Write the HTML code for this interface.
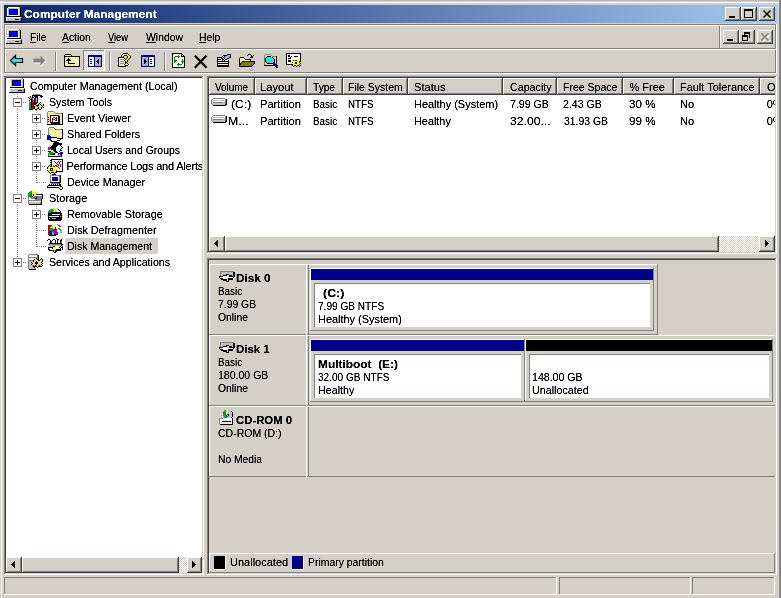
<!DOCTYPE html><html><head><meta charset="utf-8"><style>
html,body{margin:0;padding:0;width:781px;height:598px;overflow:hidden;background:#D4D0C8}
body{position:relative;font-family:"Liberation Sans",sans-serif;font-size:11px;line-height:11px}
div,span,svg{position:absolute;display:block}
span{white-space:pre;filter:url(#crisp)}
</style></head><body>
<svg width="0" height="0" style="left:0;top:0"><filter id="crisp"><feComponentTransfer><feFuncA type="linear" slope="1.6" intercept="-0.1"/></feComponentTransfer></filter></svg>
<div style="left:0px;top:0px;width:781px;height:598px;background:#D4D0C8;"></div>
<div style="left:0px;top:0px;width:781px;height:1px;background:#B8B8BC;"></div>
<div style="left:0px;top:2px;width:779px;height:1px;background:#FFFFFF;"></div>
<div style="left:1px;top:1px;width:1px;height:597px;background:#FFFFFF;"></div>
<div style="left:779px;top:0px;width:1px;height:598px;background:#8A8A8A;"></div>
<div style="left:780px;top:0px;width:1px;height:598px;background:#7E7E7E;"></div>
<div style="left:4px;top:5px;width:773px;height:18px;background:linear-gradient(to right,#0A246A,#A6CAF0);"></div>
<svg style="left:6px;top:7px" width="16" height="15" shape-rendering="crispEdges"><rect x="2" y="0" width="11" height="1" fill="#FFFFFF"/><rect x="13" y="0" width="1" height="1" fill="#808080"/><rect x="1" y="1" width="1" height="1" fill="#FFFFFF"/><rect x="2" y="1" width="12" height="1" fill="#C0C0C0"/><rect x="14" y="1" width="1" height="1" fill="#000000"/><rect x="1" y="2" width="1" height="1" fill="#FFFFFF"/><rect x="2" y="2" width="1" height="1" fill="#C0C0C0"/><rect x="3" y="2" width="9" height="1" fill="#000000"/><rect x="12" y="2" width="1" height="1" fill="#FFFFFF"/><rect x="13" y="2" width="1" height="1" fill="#C0C0C0"/><rect x="14" y="2" width="1" height="1" fill="#000000"/><rect x="1" y="3" width="1" height="1" fill="#FFFFFF"/><rect x="2" y="3" width="1" height="1" fill="#C0C0C0"/><rect x="3" y="3" width="1" height="1" fill="#000000"/><rect x="4" y="3" width="8" height="1" fill="#0000FF"/><rect x="12" y="3" width="1" height="1" fill="#FFFFFF"/><rect x="13" y="3" width="1" height="1" fill="#C0C0C0"/><rect x="14" y="3" width="1" height="1" fill="#000000"/><rect x="1" y="4" width="1" height="1" fill="#FFFFFF"/><rect x="2" y="4" width="1" height="1" fill="#C0C0C0"/><rect x="3" y="4" width="1" height="1" fill="#000000"/><rect x="4" y="4" width="8" height="1" fill="#0000FF"/><rect x="12" y="4" width="1" height="1" fill="#FFFFFF"/><rect x="13" y="4" width="1" height="1" fill="#C0C0C0"/><rect x="14" y="4" width="1" height="1" fill="#000000"/><rect x="1" y="5" width="1" height="1" fill="#FFFFFF"/><rect x="2" y="5" width="1" height="1" fill="#C0C0C0"/><rect x="3" y="5" width="1" height="1" fill="#000000"/><rect x="4" y="5" width="8" height="1" fill="#0000FF"/><rect x="12" y="5" width="1" height="1" fill="#FFFFFF"/><rect x="13" y="5" width="1" height="1" fill="#C0C0C0"/><rect x="14" y="5" width="1" height="1" fill="#000000"/><rect x="1" y="6" width="1" height="1" fill="#FFFFFF"/><rect x="2" y="6" width="1" height="1" fill="#C0C0C0"/><rect x="3" y="6" width="1" height="1" fill="#000000"/><rect x="4" y="6" width="8" height="1" fill="#0000FF"/><rect x="12" y="6" width="1" height="1" fill="#FFFFFF"/><rect x="13" y="6" width="1" height="1" fill="#C0C0C0"/><rect x="14" y="6" width="1" height="1" fill="#000000"/><rect x="1" y="7" width="1" height="1" fill="#FFFFFF"/><rect x="2" y="7" width="1" height="1" fill="#C0C0C0"/><rect x="3" y="7" width="1" height="1" fill="#000000"/><rect x="4" y="7" width="8" height="1" fill="#0000FF"/><rect x="12" y="7" width="1" height="1" fill="#FFFFFF"/><rect x="13" y="7" width="1" height="1" fill="#C0C0C0"/><rect x="14" y="7" width="1" height="1" fill="#000000"/><rect x="1" y="8" width="1" height="1" fill="#FFFFFF"/><rect x="2" y="8" width="1" height="1" fill="#C0C0C0"/><rect x="3" y="8" width="10" height="1" fill="#FFFFFF"/><rect x="13" y="8" width="1" height="1" fill="#C0C0C0"/><rect x="14" y="8" width="1" height="1" fill="#000000"/><rect x="1" y="9" width="14" height="1" fill="#000000"/><rect x="0" y="10" width="15" height="1" fill="#FFFFFF"/><rect x="15" y="10" width="1" height="1" fill="#808080"/><rect x="0" y="11" width="1" height="1" fill="#FFFFFF"/><rect x="1" y="11" width="13" height="1" fill="#C0C0C0"/><rect x="14" y="11" width="1" height="1" fill="#808080"/><rect x="15" y="11" width="1" height="1" fill="#000000"/><rect x="0" y="12" width="1" height="1" fill="#FFFFFF"/><rect x="1" y="12" width="8" height="1" fill="#C0C0C0"/><rect x="9" y="12" width="4" height="1" fill="#000000"/><rect x="13" y="12" width="1" height="1" fill="#C0C0C0"/><rect x="14" y="12" width="1" height="1" fill="#808080"/><rect x="15" y="12" width="1" height="1" fill="#000000"/><rect x="0" y="13" width="1" height="1" fill="#FFFFFF"/><rect x="1" y="13" width="13" height="1" fill="#C0C0C0"/><rect x="14" y="13" width="1" height="1" fill="#808080"/><rect x="15" y="13" width="1" height="1" fill="#000000"/><rect x="0" y="14" width="16" height="1" fill="#000000"/></svg>
<span style="left:24.01px;top:9px;font-weight:bold;transform:scaleX(1.0851);transform-origin:0 0;color:#fff;">Computer Management</span>
<div style="left:725px;top:7px;width:16px;height:14px;background:#D4D0C8;"></div>
<div style="left:725px;top:7px;width:16px;height:1px;background:#FFFFFF;"></div>
<div style="left:725px;top:7px;width:1px;height:14px;background:#FFFFFF;"></div>
<div style="left:725px;top:20px;width:16px;height:1px;background:#404040;"></div>
<div style="left:740px;top:7px;width:1px;height:14px;background:#404040;"></div>
<div style="left:726px;top:19px;width:14px;height:1px;background:#808080;"></div>
<div style="left:739px;top:8px;width:1px;height:12px;background:#808080;"></div>
<div style="left:741px;top:7px;width:16px;height:14px;background:#D4D0C8;"></div>
<div style="left:741px;top:7px;width:16px;height:1px;background:#FFFFFF;"></div>
<div style="left:741px;top:7px;width:1px;height:14px;background:#FFFFFF;"></div>
<div style="left:741px;top:20px;width:16px;height:1px;background:#404040;"></div>
<div style="left:756px;top:7px;width:1px;height:14px;background:#404040;"></div>
<div style="left:742px;top:19px;width:14px;height:1px;background:#808080;"></div>
<div style="left:755px;top:8px;width:1px;height:12px;background:#808080;"></div>
<div style="left:759px;top:7px;width:16px;height:14px;background:#D4D0C8;"></div>
<div style="left:759px;top:7px;width:16px;height:1px;background:#FFFFFF;"></div>
<div style="left:759px;top:7px;width:1px;height:14px;background:#FFFFFF;"></div>
<div style="left:759px;top:20px;width:16px;height:1px;background:#404040;"></div>
<div style="left:774px;top:7px;width:1px;height:14px;background:#404040;"></div>
<div style="left:760px;top:19px;width:14px;height:1px;background:#808080;"></div>
<div style="left:773px;top:8px;width:1px;height:12px;background:#808080;"></div>
<svg style="left:725px;top:7px" width="50" height="14" viewBox="0 0 50 14"><g shape-rendering="crispEdges"><rect x="4" y="9" width="6" height="2" fill="#000"/><rect x="19" y="2" width="9" height="2" fill="#000"/><rect x="19" y="4" width="1" height="7" fill="#000"/><rect x="27" y="4" width="1" height="7" fill="#000"/><rect x="19" y="10" width="9" height="1" fill="#000"/></g><path d="M38.5 3.5 L45.5 10.5 M45.5 3.5 L38.5 10.5" stroke="#000" stroke-width="1.6"/></svg>
<div style="left:4px;top:24px;width:772px;height:1px;background:#808080;"></div>
<div style="left:4px;top:24px;width:1px;height:50px;background:#808080;"></div>
<div style="left:5px;top:25px;width:771px;height:1px;background:#FFFFFF;"></div>
<div style="left:5px;top:25px;width:1px;height:48px;background:#FFFFFF;"></div>
<div style="left:775px;top:24px;width:1px;height:49px;background:#808080;"></div>
<div style="left:776px;top:24px;width:1px;height:50px;background:#FFFFFF;"></div>
<div style="left:4px;top:48px;width:772px;height:1px;background:#808080;"></div>
<div style="left:5px;top:49px;width:771px;height:1px;background:#FFFFFF;"></div>
<div style="left:4px;top:72px;width:772px;height:1px;background:#808080;"></div>
<div style="left:4px;top:73px;width:773px;height:1px;background:#FFFFFF;"></div>
<svg style="left:6px;top:29px" width="16" height="15" shape-rendering="crispEdges"><rect x="2" y="0" width="11" height="1" fill="#FFFFFF"/><rect x="13" y="0" width="1" height="1" fill="#808080"/><rect x="1" y="1" width="1" height="1" fill="#FFFFFF"/><rect x="2" y="1" width="12" height="1" fill="#C0C0C0"/><rect x="14" y="1" width="1" height="1" fill="#000000"/><rect x="1" y="2" width="1" height="1" fill="#FFFFFF"/><rect x="2" y="2" width="1" height="1" fill="#C0C0C0"/><rect x="3" y="2" width="9" height="1" fill="#000000"/><rect x="12" y="2" width="1" height="1" fill="#FFFFFF"/><rect x="13" y="2" width="1" height="1" fill="#C0C0C0"/><rect x="14" y="2" width="1" height="1" fill="#000000"/><rect x="1" y="3" width="1" height="1" fill="#FFFFFF"/><rect x="2" y="3" width="1" height="1" fill="#C0C0C0"/><rect x="3" y="3" width="1" height="1" fill="#000000"/><rect x="4" y="3" width="8" height="1" fill="#0000FF"/><rect x="12" y="3" width="1" height="1" fill="#FFFFFF"/><rect x="13" y="3" width="1" height="1" fill="#C0C0C0"/><rect x="14" y="3" width="1" height="1" fill="#000000"/><rect x="1" y="4" width="1" height="1" fill="#FFFFFF"/><rect x="2" y="4" width="1" height="1" fill="#C0C0C0"/><rect x="3" y="4" width="1" height="1" fill="#000000"/><rect x="4" y="4" width="8" height="1" fill="#0000FF"/><rect x="12" y="4" width="1" height="1" fill="#FFFFFF"/><rect x="13" y="4" width="1" height="1" fill="#C0C0C0"/><rect x="14" y="4" width="1" height="1" fill="#000000"/><rect x="1" y="5" width="1" height="1" fill="#FFFFFF"/><rect x="2" y="5" width="1" height="1" fill="#C0C0C0"/><rect x="3" y="5" width="1" height="1" fill="#000000"/><rect x="4" y="5" width="8" height="1" fill="#0000FF"/><rect x="12" y="5" width="1" height="1" fill="#FFFFFF"/><rect x="13" y="5" width="1" height="1" fill="#C0C0C0"/><rect x="14" y="5" width="1" height="1" fill="#000000"/><rect x="1" y="6" width="1" height="1" fill="#FFFFFF"/><rect x="2" y="6" width="1" height="1" fill="#C0C0C0"/><rect x="3" y="6" width="1" height="1" fill="#000000"/><rect x="4" y="6" width="8" height="1" fill="#0000FF"/><rect x="12" y="6" width="1" height="1" fill="#FFFFFF"/><rect x="13" y="6" width="1" height="1" fill="#C0C0C0"/><rect x="14" y="6" width="1" height="1" fill="#000000"/><rect x="1" y="7" width="1" height="1" fill="#FFFFFF"/><rect x="2" y="7" width="1" height="1" fill="#C0C0C0"/><rect x="3" y="7" width="1" height="1" fill="#000000"/><rect x="4" y="7" width="8" height="1" fill="#0000FF"/><rect x="12" y="7" width="1" height="1" fill="#FFFFFF"/><rect x="13" y="7" width="1" height="1" fill="#C0C0C0"/><rect x="14" y="7" width="1" height="1" fill="#000000"/><rect x="1" y="8" width="1" height="1" fill="#FFFFFF"/><rect x="2" y="8" width="1" height="1" fill="#C0C0C0"/><rect x="3" y="8" width="10" height="1" fill="#FFFFFF"/><rect x="13" y="8" width="1" height="1" fill="#C0C0C0"/><rect x="14" y="8" width="1" height="1" fill="#000000"/><rect x="1" y="9" width="14" height="1" fill="#000000"/><rect x="0" y="10" width="15" height="1" fill="#FFFFFF"/><rect x="15" y="10" width="1" height="1" fill="#808080"/><rect x="0" y="11" width="1" height="1" fill="#FFFFFF"/><rect x="1" y="11" width="13" height="1" fill="#C0C0C0"/><rect x="14" y="11" width="1" height="1" fill="#808080"/><rect x="15" y="11" width="1" height="1" fill="#000000"/><rect x="0" y="12" width="1" height="1" fill="#FFFFFF"/><rect x="1" y="12" width="8" height="1" fill="#C0C0C0"/><rect x="9" y="12" width="4" height="1" fill="#000000"/><rect x="13" y="12" width="1" height="1" fill="#C0C0C0"/><rect x="14" y="12" width="1" height="1" fill="#808080"/><rect x="15" y="12" width="1" height="1" fill="#000000"/><rect x="0" y="13" width="1" height="1" fill="#FFFFFF"/><rect x="1" y="13" width="13" height="1" fill="#C0C0C0"/><rect x="14" y="13" width="1" height="1" fill="#808080"/><rect x="15" y="13" width="1" height="1" fill="#000000"/><rect x="0" y="14" width="16" height="1" fill="#000000"/></svg>
<span style="left:29.67px;top:32px;transform:scaleX(0.9180);transform-origin:0 0;color:#000;">File</span>
<div style="left:30px;top:42px;width:6px;height:1px;background:#000;"></div>
<span style="left:62.48px;top:32px;transform:scaleX(0.9387);transform-origin:0 0;color:#000;">Action</span>
<div style="left:62px;top:42px;width:7px;height:1px;background:#000;"></div>
<span style="left:108.46px;top:32px;transform:scaleX(0.8467);transform-origin:0 0;color:#000;">View</span>
<div style="left:108px;top:42px;width:7px;height:1px;background:#000;"></div>
<span style="left:146.45px;top:32px;transform:scaleX(0.9463);transform-origin:0 0;color:#000;">Window</span>
<div style="left:146px;top:42px;width:10px;height:1px;background:#000;"></div>
<span style="left:198.65px;top:32px;transform:scaleX(0.9403);transform-origin:0 0;color:#000;">Help</span>
<div style="left:199px;top:42px;width:7px;height:1px;background:#000;"></div>
<div style="left:719px;top:26px;width:1px;height:22px;background:#808080;"></div>
<div style="left:720px;top:26px;width:1px;height:22px;background:#FFFFFF;"></div>
<div style="left:723px;top:30px;width:16px;height:14px;background:#D4D0C8;"></div>
<div style="left:723px;top:30px;width:16px;height:1px;background:#FFFFFF;"></div>
<div style="left:723px;top:30px;width:1px;height:14px;background:#FFFFFF;"></div>
<div style="left:723px;top:43px;width:16px;height:1px;background:#404040;"></div>
<div style="left:738px;top:30px;width:1px;height:14px;background:#404040;"></div>
<div style="left:724px;top:42px;width:14px;height:1px;background:#808080;"></div>
<div style="left:737px;top:31px;width:1px;height:12px;background:#808080;"></div>
<div style="left:739px;top:30px;width:16px;height:14px;background:#D4D0C8;"></div>
<div style="left:739px;top:30px;width:16px;height:1px;background:#FFFFFF;"></div>
<div style="left:739px;top:30px;width:1px;height:14px;background:#FFFFFF;"></div>
<div style="left:739px;top:43px;width:16px;height:1px;background:#404040;"></div>
<div style="left:754px;top:30px;width:1px;height:14px;background:#404040;"></div>
<div style="left:740px;top:42px;width:14px;height:1px;background:#808080;"></div>
<div style="left:753px;top:31px;width:1px;height:12px;background:#808080;"></div>
<div style="left:757px;top:30px;width:16px;height:14px;background:#D4D0C8;"></div>
<div style="left:757px;top:30px;width:16px;height:1px;background:#FFFFFF;"></div>
<div style="left:757px;top:30px;width:1px;height:14px;background:#FFFFFF;"></div>
<div style="left:757px;top:43px;width:16px;height:1px;background:#404040;"></div>
<div style="left:772px;top:30px;width:1px;height:14px;background:#404040;"></div>
<div style="left:758px;top:42px;width:14px;height:1px;background:#808080;"></div>
<div style="left:771px;top:31px;width:1px;height:12px;background:#808080;"></div>
<svg style="left:723px;top:30px" width="50" height="14" viewBox="0 0 50 14"><g shape-rendering="crispEdges"><rect x="4" y="9" width="6" height="2" fill="#000"/><rect x="21" y="2" width="6" height="2" fill="#000"/><rect x="26" y="4" width="1" height="4" fill="#000"/><rect x="21" y="4" width="1" height="1" fill="#000"/><rect x="19" y="5" width="6" height="2" fill="#000"/><rect x="19" y="7" width="1" height="4" fill="#000"/><rect x="24" y="7" width="1" height="4" fill="#000"/><rect x="19" y="10" width="6" height="1" fill="#000"/></g><path d="M38.5 3.5 L45.5 10.5 M45.5 3.5 L38.5 10.5" stroke="#fff" stroke-width="1.6" transform="translate(1 1)"/><path d="M38.5 3.5 L45.5 10.5 M45.5 3.5 L38.5 10.5" stroke="#808080" stroke-width="1.6"/></svg>
<div style="left:55px;top:52px;width:1px;height:19px;background:#808080;"></div>
<div style="left:56px;top:52px;width:1px;height:19px;background:#FFFFFF;"></div>
<div style="left:109px;top:52px;width:1px;height:19px;background:#808080;"></div>
<div style="left:110px;top:52px;width:1px;height:19px;background:#FFFFFF;"></div>
<div style="left:164px;top:52px;width:1px;height:19px;background:#808080;"></div>
<div style="left:165px;top:52px;width:1px;height:19px;background:#FFFFFF;"></div>
<div style="left:83px;top:50px;width:22px;height:21px;background:repeating-conic-gradient(#fff 0 25%,#D4D0C8 0 50%) 0 0/2px 2px;"></div>
<div style="left:83px;top:50px;width:22px;height:1px;background:#808080;"></div>
<div style="left:83px;top:50px;width:1px;height:21px;background:#808080;"></div>
<div style="left:83px;top:70px;width:22px;height:1px;background:#FFFFFF;"></div>
<div style="left:104px;top:50px;width:1px;height:21px;background:#FFFFFF;"></div>
<svg style="left:8px;top:52px" width="18" height="16" viewBox="0 0 18 16"><path d="M2.5 8.5 L7.5 3.5 L7.5 6.5 L14.5 6.5 L14.5 10.5 L7.5 10.5 L7.5 13.5 Z" fill="#33E6E6" stroke="#000" stroke-width="1.2"/></svg>
<svg style="left:31px;top:52px" width="18" height="16" viewBox="0 0 18 16"><path d="M15.5 9.5 L10.5 4.5 L10.5 7.5 L3.5 7.5 L3.5 11.5 L10.5 11.5 L10.5 14.5 Z" fill="#fff"/><path d="M14.5 8.5 L9.5 3.5 L9.5 6.5 L2.5 6.5 L2.5 10.5 L9.5 10.5 L9.5 13.5 Z" fill="#808080"/></svg>
<svg style="left:64px;top:54px" width="16" height="13" shape-rendering="crispEdges"><rect x="1" y="0" width="6" height="1" fill="#000000"/><rect x="0" y="1" width="1" height="1" fill="#000000"/><rect x="1" y="1" width="1" height="1" fill="#F4F0A0"/><rect x="2" y="1" width="4" height="1" fill="#FFFFFF"/><rect x="6" y="1" width="1" height="1" fill="#F4F0A0"/><rect x="7" y="1" width="1" height="1" fill="#000000"/><rect x="0" y="2" width="16" height="1" fill="#000000"/><rect x="0" y="3" width="1" height="1" fill="#000000"/><rect x="1" y="3" width="14" height="1" fill="#F4F0A0"/><rect x="15" y="3" width="1" height="1" fill="#000000"/><rect x="0" y="4" width="1" height="1" fill="#000000"/><rect x="1" y="4" width="3" height="1" fill="#F4F0A0"/><rect x="4" y="4" width="1" height="1" fill="#000000"/><rect x="5" y="4" width="10" height="1" fill="#F4F0A0"/><rect x="15" y="4" width="1" height="1" fill="#000000"/><rect x="0" y="5" width="1" height="1" fill="#000000"/><rect x="1" y="5" width="2" height="1" fill="#F4F0A0"/><rect x="3" y="5" width="3" height="1" fill="#000000"/><rect x="6" y="5" width="9" height="1" fill="#F4F0A0"/><rect x="15" y="5" width="1" height="1" fill="#000000"/><rect x="0" y="6" width="1" height="1" fill="#000000"/><rect x="1" y="6" width="1" height="1" fill="#F4F0A0"/><rect x="2" y="6" width="5" height="1" fill="#000000"/><rect x="7" y="6" width="8" height="1" fill="#F4F0A0"/><rect x="15" y="6" width="1" height="1" fill="#000000"/><rect x="0" y="7" width="1" height="1" fill="#000000"/><rect x="1" y="7" width="3" height="1" fill="#F4F0A0"/><rect x="4" y="7" width="1" height="1" fill="#000000"/><rect x="5" y="7" width="10" height="1" fill="#F4F0A0"/><rect x="15" y="7" width="1" height="1" fill="#000000"/><rect x="0" y="8" width="1" height="1" fill="#000000"/><rect x="1" y="8" width="3" height="1" fill="#F4F0A0"/><rect x="4" y="8" width="1" height="1" fill="#000000"/><rect x="5" y="8" width="10" height="1" fill="#F4F0A0"/><rect x="15" y="8" width="1" height="1" fill="#000000"/><rect x="0" y="9" width="1" height="1" fill="#000000"/><rect x="1" y="9" width="3" height="1" fill="#F4F0A0"/><rect x="4" y="9" width="7" height="1" fill="#000000"/><rect x="11" y="9" width="4" height="1" fill="#F4F0A0"/><rect x="15" y="9" width="1" height="1" fill="#000000"/><rect x="0" y="10" width="1" height="1" fill="#000000"/><rect x="1" y="10" width="14" height="1" fill="#F4F0A0"/><rect x="15" y="10" width="1" height="1" fill="#000000"/><rect x="0" y="11" width="1" height="1" fill="#000000"/><rect x="1" y="11" width="14" height="1" fill="#F4F0A0"/><rect x="15" y="11" width="1" height="1" fill="#000000"/><rect x="0" y="12" width="16" height="1" fill="#000000"/></svg>
<svg style="left:88px;top:55px" width="14" height="12" shape-rendering="crispEdges"><rect x="0" y="0" width="14" height="1" fill="#000080"/><rect x="0" y="1" width="14" height="1" fill="#000080"/><rect x="0" y="2" width="1" height="1" fill="#000080"/><rect x="1" y="2" width="5" height="1" fill="#FFFFFF"/><rect x="6" y="2" width="1" height="1" fill="#000080"/><rect x="7" y="2" width="6" height="1" fill="#A8A8E8"/><rect x="13" y="2" width="1" height="1" fill="#000080"/><rect x="0" y="3" width="1" height="1" fill="#000080"/><rect x="1" y="3" width="5" height="1" fill="#FFFFFF"/><rect x="6" y="3" width="1" height="1" fill="#000080"/><rect x="7" y="3" width="6" height="1" fill="#A8A8E8"/><rect x="13" y="3" width="1" height="1" fill="#000080"/><rect x="0" y="4" width="1" height="1" fill="#000080"/><rect x="1" y="4" width="1" height="1" fill="#FFFFFF"/><rect x="2" y="4" width="2" height="1" fill="#000000"/><rect x="4" y="4" width="2" height="1" fill="#FFFFFF"/><rect x="6" y="4" width="1" height="1" fill="#000080"/><rect x="7" y="4" width="3" height="1" fill="#A8A8E8"/><rect x="10" y="4" width="1" height="1" fill="#000000"/><rect x="11" y="4" width="2" height="1" fill="#A8A8E8"/><rect x="13" y="4" width="1" height="1" fill="#000080"/><rect x="0" y="5" width="1" height="1" fill="#000080"/><rect x="1" y="5" width="5" height="1" fill="#FFFFFF"/><rect x="6" y="5" width="1" height="1" fill="#000080"/><rect x="7" y="5" width="2" height="1" fill="#A8A8E8"/><rect x="9" y="5" width="2" height="1" fill="#000000"/><rect x="11" y="5" width="2" height="1" fill="#A8A8E8"/><rect x="13" y="5" width="1" height="1" fill="#000080"/><rect x="0" y="6" width="1" height="1" fill="#000080"/><rect x="1" y="6" width="1" height="1" fill="#FFFFFF"/><rect x="2" y="6" width="2" height="1" fill="#000000"/><rect x="4" y="6" width="2" height="1" fill="#FFFFFF"/><rect x="6" y="6" width="1" height="1" fill="#000080"/><rect x="7" y="6" width="1" height="1" fill="#A8A8E8"/><rect x="8" y="6" width="3" height="1" fill="#000000"/><rect x="11" y="6" width="2" height="1" fill="#A8A8E8"/><rect x="13" y="6" width="1" height="1" fill="#000080"/><rect x="0" y="7" width="1" height="1" fill="#000080"/><rect x="1" y="7" width="5" height="1" fill="#FFFFFF"/><rect x="6" y="7" width="1" height="1" fill="#000080"/><rect x="7" y="7" width="2" height="1" fill="#A8A8E8"/><rect x="9" y="7" width="2" height="1" fill="#000000"/><rect x="11" y="7" width="2" height="1" fill="#A8A8E8"/><rect x="13" y="7" width="1" height="1" fill="#000080"/><rect x="0" y="8" width="1" height="1" fill="#000080"/><rect x="1" y="8" width="1" height="1" fill="#FFFFFF"/><rect x="2" y="8" width="2" height="1" fill="#000000"/><rect x="4" y="8" width="2" height="1" fill="#FFFFFF"/><rect x="6" y="8" width="1" height="1" fill="#000080"/><rect x="7" y="8" width="3" height="1" fill="#A8A8E8"/><rect x="10" y="8" width="1" height="1" fill="#000000"/><rect x="11" y="8" width="2" height="1" fill="#A8A8E8"/><rect x="13" y="8" width="1" height="1" fill="#000080"/><rect x="0" y="9" width="1" height="1" fill="#000080"/><rect x="1" y="9" width="5" height="1" fill="#FFFFFF"/><rect x="6" y="9" width="1" height="1" fill="#000080"/><rect x="7" y="9" width="6" height="1" fill="#A8A8E8"/><rect x="13" y="9" width="1" height="1" fill="#000080"/><rect x="0" y="10" width="1" height="1" fill="#000080"/><rect x="1" y="10" width="5" height="1" fill="#FFFFFF"/><rect x="6" y="10" width="1" height="1" fill="#000080"/><rect x="7" y="10" width="6" height="1" fill="#A8A8E8"/><rect x="13" y="10" width="1" height="1" fill="#000080"/><rect x="0" y="11" width="14" height="1" fill="#000080"/></svg>
<svg style="left:117px;top:53px" width="16" height="14" shape-rendering="crispEdges"><rect x="6" y="0" width="5" height="1" fill="#000000"/><rect x="5" y="1" width="1" height="1" fill="#000000"/><rect x="6" y="1" width="5" height="1" fill="#FFFF00"/><rect x="11" y="1" width="1" height="1" fill="#000000"/><rect x="4" y="2" width="1" height="1" fill="#000000"/><rect x="5" y="2" width="2" height="1" fill="#FFFF00"/><rect x="7" y="2" width="3" height="1" fill="#000000"/><rect x="10" y="2" width="2" height="1" fill="#FFFF00"/><rect x="12" y="2" width="1" height="1" fill="#000000"/><rect x="4" y="3" width="1" height="1" fill="#000000"/><rect x="5" y="3" width="1" height="1" fill="#FFFF00"/><rect x="6" y="3" width="1" height="1" fill="#000000"/><rect x="10" y="3" width="1" height="1" fill="#000000"/><rect x="11" y="3" width="2" height="1" fill="#FFFF00"/><rect x="13" y="3" width="1" height="1" fill="#000000"/><rect x="1" y="4" width="6" height="1" fill="#000000"/><rect x="10" y="4" width="1" height="1" fill="#000000"/><rect x="11" y="4" width="2" height="1" fill="#FFFF00"/><rect x="13" y="4" width="1" height="1" fill="#000000"/><rect x="1" y="5" width="1" height="1" fill="#000000"/><rect x="2" y="5" width="5" height="1" fill="#FFFFFF"/><rect x="7" y="5" width="1" height="1" fill="#000000"/><rect x="9" y="5" width="1" height="1" fill="#000000"/><rect x="10" y="5" width="2" height="1" fill="#FFFF00"/><rect x="12" y="5" width="1" height="1" fill="#000000"/><rect x="1" y="6" width="1" height="1" fill="#000000"/><rect x="2" y="6" width="1" height="1" fill="#FFFFFF"/><rect x="3" y="6" width="4" height="1" fill="#808080"/><rect x="7" y="6" width="1" height="1" fill="#FFFFFF"/><rect x="8" y="6" width="1" height="1" fill="#000000"/><rect x="9" y="6" width="2" height="1" fill="#FFFF00"/><rect x="11" y="6" width="1" height="1" fill="#000000"/><rect x="1" y="7" width="1" height="1" fill="#000000"/><rect x="2" y="7" width="5" height="1" fill="#FFFFFF"/><rect x="7" y="7" width="1" height="1" fill="#000000"/><rect x="8" y="7" width="2" height="1" fill="#FFFF00"/><rect x="10" y="7" width="1" height="1" fill="#000000"/><rect x="1" y="8" width="1" height="1" fill="#000000"/><rect x="2" y="8" width="1" height="1" fill="#FFFFFF"/><rect x="3" y="8" width="4" height="1" fill="#808080"/><rect x="7" y="8" width="1" height="1" fill="#FFFFFF"/><rect x="8" y="8" width="1" height="1" fill="#000000"/><rect x="9" y="8" width="1" height="1" fill="#FFFF00"/><rect x="10" y="8" width="1" height="1" fill="#000000"/><rect x="1" y="9" width="1" height="1" fill="#000000"/><rect x="2" y="9" width="6" height="1" fill="#FFFFFF"/><rect x="8" y="9" width="2" height="1" fill="#000000"/><rect x="1" y="10" width="1" height="1" fill="#000000"/><rect x="2" y="10" width="1" height="1" fill="#FFFFFF"/><rect x="3" y="10" width="4" height="1" fill="#808080"/><rect x="7" y="10" width="1" height="1" fill="#FFFFFF"/><rect x="8" y="10" width="1" height="1" fill="#000000"/><rect x="9" y="10" width="1" height="1" fill="#FFFF00"/><rect x="10" y="10" width="1" height="1" fill="#000000"/><rect x="1" y="11" width="1" height="1" fill="#000000"/><rect x="2" y="11" width="5" height="1" fill="#FFFFFF"/><rect x="7" y="11" width="1" height="1" fill="#000000"/><rect x="8" y="11" width="3" height="1" fill="#FFFF00"/><rect x="11" y="11" width="1" height="1" fill="#000000"/><rect x="1" y="12" width="1" height="1" fill="#000000"/><rect x="2" y="12" width="6" height="1" fill="#FFFFFF"/><rect x="8" y="12" width="3" height="1" fill="#000000"/><rect x="1" y="13" width="8" height="1" fill="#000000"/></svg>
<svg style="left:141px;top:55px" width="14" height="12" shape-rendering="crispEdges"><rect x="0" y="0" width="14" height="1" fill="#000080"/><rect x="0" y="1" width="14" height="1" fill="#000080"/><rect x="0" y="2" width="1" height="1" fill="#000080"/><rect x="1" y="2" width="6" height="1" fill="#A8A8E8"/><rect x="7" y="2" width="1" height="1" fill="#000080"/><rect x="8" y="2" width="5" height="1" fill="#FFFFFF"/><rect x="13" y="2" width="1" height="1" fill="#000080"/><rect x="0" y="3" width="1" height="1" fill="#000080"/><rect x="1" y="3" width="6" height="1" fill="#A8A8E8"/><rect x="7" y="3" width="1" height="1" fill="#000080"/><rect x="8" y="3" width="5" height="1" fill="#FFFFFF"/><rect x="13" y="3" width="1" height="1" fill="#000080"/><rect x="0" y="4" width="1" height="1" fill="#000080"/><rect x="1" y="4" width="2" height="1" fill="#A8A8E8"/><rect x="3" y="4" width="1" height="1" fill="#000000"/><rect x="4" y="4" width="3" height="1" fill="#A8A8E8"/><rect x="7" y="4" width="1" height="1" fill="#000080"/><rect x="8" y="4" width="1" height="1" fill="#FFFFFF"/><rect x="9" y="4" width="2" height="1" fill="#000000"/><rect x="11" y="4" width="2" height="1" fill="#FFFFFF"/><rect x="13" y="4" width="1" height="1" fill="#000080"/><rect x="0" y="5" width="1" height="1" fill="#000080"/><rect x="1" y="5" width="2" height="1" fill="#A8A8E8"/><rect x="3" y="5" width="2" height="1" fill="#000000"/><rect x="5" y="5" width="2" height="1" fill="#A8A8E8"/><rect x="7" y="5" width="1" height="1" fill="#000080"/><rect x="8" y="5" width="5" height="1" fill="#FFFFFF"/><rect x="13" y="5" width="1" height="1" fill="#000080"/><rect x="0" y="6" width="1" height="1" fill="#000080"/><rect x="1" y="6" width="2" height="1" fill="#A8A8E8"/><rect x="3" y="6" width="3" height="1" fill="#000000"/><rect x="6" y="6" width="1" height="1" fill="#A8A8E8"/><rect x="7" y="6" width="1" height="1" fill="#000080"/><rect x="8" y="6" width="1" height="1" fill="#FFFFFF"/><rect x="9" y="6" width="2" height="1" fill="#000000"/><rect x="11" y="6" width="2" height="1" fill="#FFFFFF"/><rect x="13" y="6" width="1" height="1" fill="#000080"/><rect x="0" y="7" width="1" height="1" fill="#000080"/><rect x="1" y="7" width="2" height="1" fill="#A8A8E8"/><rect x="3" y="7" width="2" height="1" fill="#000000"/><rect x="5" y="7" width="2" height="1" fill="#A8A8E8"/><rect x="7" y="7" width="1" height="1" fill="#000080"/><rect x="8" y="7" width="5" height="1" fill="#FFFFFF"/><rect x="13" y="7" width="1" height="1" fill="#000080"/><rect x="0" y="8" width="1" height="1" fill="#000080"/><rect x="1" y="8" width="2" height="1" fill="#A8A8E8"/><rect x="3" y="8" width="1" height="1" fill="#000000"/><rect x="4" y="8" width="3" height="1" fill="#A8A8E8"/><rect x="7" y="8" width="1" height="1" fill="#000080"/><rect x="8" y="8" width="1" height="1" fill="#FFFFFF"/><rect x="9" y="8" width="2" height="1" fill="#000000"/><rect x="11" y="8" width="2" height="1" fill="#FFFFFF"/><rect x="13" y="8" width="1" height="1" fill="#000080"/><rect x="0" y="9" width="1" height="1" fill="#000080"/><rect x="1" y="9" width="6" height="1" fill="#A8A8E8"/><rect x="7" y="9" width="1" height="1" fill="#000080"/><rect x="8" y="9" width="5" height="1" fill="#FFFFFF"/><rect x="13" y="9" width="1" height="1" fill="#000080"/><rect x="0" y="10" width="1" height="1" fill="#000080"/><rect x="1" y="10" width="6" height="1" fill="#A8A8E8"/><rect x="7" y="10" width="1" height="1" fill="#000080"/><rect x="8" y="10" width="5" height="1" fill="#FFFFFF"/><rect x="13" y="10" width="1" height="1" fill="#000080"/><rect x="0" y="11" width="14" height="1" fill="#000080"/></svg>
<svg style="left:171px;top:53px" width="16" height="15" shape-rendering="crispEdges"><rect x="1" y="0" width="10" height="1" fill="#000000"/><rect x="1" y="1" width="1" height="1" fill="#000000"/><rect x="2" y="1" width="8" height="1" fill="#FFFFFF"/><rect x="10" y="1" width="2" height="1" fill="#000000"/><rect x="1" y="2" width="1" height="1" fill="#000000"/><rect x="2" y="2" width="5" height="1" fill="#FFFFFF"/><rect x="7" y="2" width="1" height="1" fill="#008000"/><rect x="8" y="2" width="2" height="1" fill="#FFFFFF"/><rect x="10" y="2" width="1" height="1" fill="#000000"/><rect x="11" y="2" width="1" height="1" fill="#FFFFFF"/><rect x="12" y="2" width="1" height="1" fill="#000000"/><rect x="1" y="3" width="1" height="1" fill="#000000"/><rect x="2" y="3" width="2" height="1" fill="#FFFFFF"/><rect x="4" y="3" width="5" height="1" fill="#008000"/><rect x="9" y="3" width="1" height="1" fill="#FFFFFF"/><rect x="10" y="3" width="4" height="1" fill="#000000"/><rect x="1" y="4" width="1" height="1" fill="#000000"/><rect x="2" y="4" width="1" height="1" fill="#FFFFFF"/><rect x="3" y="4" width="1" height="1" fill="#008000"/><rect x="4" y="4" width="3" height="1" fill="#FFFFFF"/><rect x="7" y="4" width="1" height="1" fill="#008000"/><rect x="8" y="4" width="5" height="1" fill="#FFFFFF"/><rect x="13" y="4" width="1" height="1" fill="#000000"/><rect x="1" y="5" width="1" height="1" fill="#000000"/><rect x="2" y="5" width="1" height="1" fill="#FFFFFF"/><rect x="3" y="5" width="1" height="1" fill="#008000"/><rect x="4" y="5" width="9" height="1" fill="#FFFFFF"/><rect x="13" y="5" width="1" height="1" fill="#000000"/><rect x="1" y="6" width="1" height="1" fill="#000000"/><rect x="2" y="6" width="1" height="1" fill="#FFFFFF"/><rect x="3" y="6" width="1" height="1" fill="#008000"/><rect x="4" y="6" width="7" height="1" fill="#FFFFFF"/><rect x="11" y="6" width="1" height="1" fill="#008000"/><rect x="12" y="6" width="1" height="1" fill="#FFFFFF"/><rect x="13" y="6" width="1" height="1" fill="#000000"/><rect x="1" y="7" width="1" height="1" fill="#000000"/><rect x="2" y="7" width="1" height="1" fill="#FFFFFF"/><rect x="3" y="7" width="3" height="1" fill="#008000"/><rect x="6" y="7" width="5" height="1" fill="#FFFFFF"/><rect x="11" y="7" width="1" height="1" fill="#008000"/><rect x="12" y="7" width="1" height="1" fill="#FFFFFF"/><rect x="13" y="7" width="1" height="1" fill="#000000"/><rect x="1" y="8" width="1" height="1" fill="#000000"/><rect x="2" y="8" width="1" height="1" fill="#FFFFFF"/><rect x="3" y="8" width="2" height="1" fill="#008000"/><rect x="5" y="8" width="5" height="1" fill="#FFFFFF"/><rect x="10" y="8" width="3" height="1" fill="#008000"/><rect x="13" y="8" width="1" height="1" fill="#000000"/><rect x="1" y="9" width="1" height="1" fill="#000000"/><rect x="2" y="9" width="1" height="1" fill="#FFFFFF"/><rect x="3" y="9" width="1" height="1" fill="#008000"/><rect x="4" y="9" width="7" height="1" fill="#FFFFFF"/><rect x="11" y="9" width="1" height="1" fill="#008000"/><rect x="12" y="9" width="1" height="1" fill="#FFFFFF"/><rect x="13" y="9" width="1" height="1" fill="#000000"/><rect x="1" y="10" width="1" height="1" fill="#000000"/><rect x="2" y="10" width="5" height="1" fill="#FFFFFF"/><rect x="7" y="10" width="1" height="1" fill="#008000"/><rect x="8" y="10" width="3" height="1" fill="#FFFFFF"/><rect x="11" y="10" width="1" height="1" fill="#008000"/><rect x="12" y="10" width="1" height="1" fill="#FFFFFF"/><rect x="13" y="10" width="1" height="1" fill="#000000"/><rect x="1" y="11" width="1" height="1" fill="#000000"/><rect x="2" y="11" width="4" height="1" fill="#FFFFFF"/><rect x="6" y="11" width="5" height="1" fill="#008000"/><rect x="11" y="11" width="2" height="1" fill="#FFFFFF"/><rect x="13" y="11" width="1" height="1" fill="#000000"/><rect x="1" y="12" width="1" height="1" fill="#000000"/><rect x="2" y="12" width="5" height="1" fill="#FFFFFF"/><rect x="7" y="12" width="1" height="1" fill="#008000"/><rect x="8" y="12" width="5" height="1" fill="#FFFFFF"/><rect x="13" y="12" width="1" height="1" fill="#000000"/><rect x="1" y="13" width="1" height="1" fill="#000000"/><rect x="2" y="13" width="11" height="1" fill="#FFFFFF"/><rect x="13" y="13" width="1" height="1" fill="#000000"/><rect x="1" y="14" width="13" height="1" fill="#000000"/></svg>
<svg style="left:192px;top:53px" width="18" height="17" viewBox="0 0 18 17"><path d="M2.8 2.5 L14.5 14.8 M14.5 2.5 L2.8 14.8" stroke="#000" stroke-width="2.2"/></svg>
<svg style="left:216px;top:53px" width="16" height="14" shape-rendering="crispEdges"><rect x="11" y="1" width="4" height="1" fill="#000000"/><rect x="7" y="2" width="4" height="1" fill="#000000"/><rect x="11" y="2" width="1" height="1" fill="#808080"/><rect x="12" y="2" width="2" height="1" fill="#A8A8E8"/><rect x="14" y="2" width="1" height="1" fill="#000000"/><rect x="6" y="3" width="1" height="1" fill="#000000"/><rect x="7" y="3" width="1" height="1" fill="#FFFFFF"/><rect x="8" y="3" width="1" height="1" fill="#000000"/><rect x="9" y="3" width="5" height="1" fill="#A8A8E8"/><rect x="14" y="3" width="1" height="1" fill="#000000"/><rect x="1" y="4" width="5" height="1" fill="#000000"/><rect x="6" y="4" width="1" height="1" fill="#FFFFFF"/><rect x="7" y="4" width="1" height="1" fill="#000000"/><rect x="8" y="4" width="5" height="1" fill="#A8A8E8"/><rect x="13" y="4" width="2" height="1" fill="#000000"/><rect x="1" y="5" width="1" height="1" fill="#000000"/><rect x="2" y="5" width="3" height="1" fill="#FFFFFF"/><rect x="5" y="5" width="2" height="1" fill="#000000"/><rect x="7" y="5" width="1" height="1" fill="#FFFFFF"/><rect x="8" y="5" width="1" height="1" fill="#000000"/><rect x="9" y="5" width="2" height="1" fill="#A8A8E8"/><rect x="11" y="5" width="2" height="1" fill="#000000"/><rect x="1" y="6" width="4" height="1" fill="#000000"/><rect x="5" y="6" width="1" height="1" fill="#FFFFFF"/><rect x="6" y="6" width="2" height="1" fill="#000000"/><rect x="8" y="6" width="1" height="1" fill="#FFFFFF"/><rect x="9" y="6" width="2" height="1" fill="#000000"/><rect x="1" y="7" width="1" height="1" fill="#000000"/><rect x="2" y="7" width="4" height="1" fill="#FFFFFF"/><rect x="6" y="7" width="1" height="1" fill="#000000"/><rect x="7" y="7" width="1" height="1" fill="#FFFFFF"/><rect x="8" y="7" width="1" height="1" fill="#000000"/><rect x="9" y="7" width="3" height="1" fill="#FFFFFF"/><rect x="12" y="7" width="1" height="1" fill="#000000"/><rect x="1" y="8" width="12" height="1" fill="#000000"/><rect x="1" y="9" width="1" height="1" fill="#000000"/><rect x="2" y="9" width="10" height="1" fill="#FFFFFF"/><rect x="12" y="9" width="1" height="1" fill="#000000"/><rect x="1" y="10" width="12" height="1" fill="#000000"/><rect x="1" y="11" width="1" height="1" fill="#000000"/><rect x="2" y="11" width="10" height="1" fill="#FFFFFF"/><rect x="12" y="11" width="1" height="1" fill="#000000"/><rect x="1" y="12" width="12" height="1" fill="#000000"/><rect x="1" y="13" width="12" height="1" fill="#000000"/></svg>
<svg style="left:239px;top:54px" width="16" height="13" shape-rendering="crispEdges"><rect x="9" y="0" width="3" height="1" fill="#000000"/><rect x="8" y="1" width="1" height="1" fill="#000000"/><rect x="12" y="1" width="1" height="1" fill="#000000"/><rect x="14" y="1" width="1" height="1" fill="#000000"/><rect x="12" y="2" width="2" height="1" fill="#000000"/><rect x="1" y="3" width="4" height="1" fill="#000000"/><rect x="11" y="3" width="3" height="1" fill="#000000"/><rect x="0" y="4" width="1" height="1" fill="#000000"/><rect x="1" y="4" width="4" height="1" fill="#F4F0A0"/><rect x="5" y="4" width="1" height="1" fill="#000000"/><rect x="0" y="5" width="1" height="1" fill="#000000"/><rect x="1" y="5" width="1" height="1" fill="#F4F0A0"/><rect x="2" y="5" width="1" height="1" fill="#FFFFFF"/><rect x="3" y="5" width="1" height="1" fill="#F4F0A0"/><rect x="4" y="5" width="1" height="1" fill="#FFFFFF"/><rect x="5" y="5" width="1" height="1" fill="#F4F0A0"/><rect x="6" y="5" width="6" height="1" fill="#000000"/><rect x="0" y="6" width="1" height="1" fill="#000000"/><rect x="1" y="6" width="2" height="1" fill="#F4F0A0"/><rect x="3" y="6" width="1" height="1" fill="#FFFFFF"/><rect x="4" y="6" width="1" height="1" fill="#F4F0A0"/><rect x="5" y="6" width="1" height="1" fill="#FFFFFF"/><rect x="6" y="6" width="1" height="1" fill="#F4F0A0"/><rect x="7" y="6" width="1" height="1" fill="#FFFFFF"/><rect x="8" y="6" width="1" height="1" fill="#F4F0A0"/><rect x="9" y="6" width="1" height="1" fill="#FFFFFF"/><rect x="10" y="6" width="1" height="1" fill="#F4F0A0"/><rect x="11" y="6" width="1" height="1" fill="#000000"/><rect x="0" y="7" width="1" height="1" fill="#000000"/><rect x="1" y="7" width="1" height="1" fill="#F4F0A0"/><rect x="2" y="7" width="1" height="1" fill="#FFFFFF"/><rect x="3" y="7" width="13" height="1" fill="#000000"/><rect x="0" y="8" width="1" height="1" fill="#000000"/><rect x="1" y="8" width="1" height="1" fill="#F4F0A0"/><rect x="2" y="8" width="1" height="1" fill="#000000"/><rect x="3" y="8" width="12" height="1" fill="#808000"/><rect x="15" y="8" width="1" height="1" fill="#000000"/><rect x="0" y="9" width="2" height="1" fill="#000000"/><rect x="2" y="9" width="13" height="1" fill="#808000"/><rect x="15" y="9" width="1" height="1" fill="#000000"/><rect x="0" y="10" width="2" height="1" fill="#000000"/><rect x="2" y="10" width="12" height="1" fill="#808000"/><rect x="14" y="10" width="1" height="1" fill="#000000"/><rect x="0" y="11" width="1" height="1" fill="#000000"/><rect x="1" y="11" width="12" height="1" fill="#808000"/><rect x="13" y="11" width="1" height="1" fill="#000000"/><rect x="0" y="12" width="13" height="1" fill="#000000"/></svg>
<svg style="left:263px;top:54px" width="16" height="14" shape-rendering="crispEdges"><rect x="2" y="0" width="6" height="1" fill="#808080"/><rect x="1" y="1" width="1" height="1" fill="#808080"/><rect x="2" y="1" width="6" height="1" fill="#E0D8B0"/><rect x="8" y="1" width="1" height="1" fill="#808080"/><rect x="1" y="2" width="1" height="1" fill="#808080"/><rect x="2" y="2" width="2" height="1" fill="#E0D8B0"/><rect x="4" y="2" width="4" height="1" fill="#000000"/><rect x="8" y="2" width="1" height="1" fill="#E0D8B0"/><rect x="9" y="2" width="4" height="1" fill="#808080"/><rect x="13" y="2" width="1" height="1" fill="#000000"/><rect x="1" y="3" width="1" height="1" fill="#808080"/><rect x="2" y="3" width="1" height="1" fill="#E0D8B0"/><rect x="3" y="3" width="1" height="1" fill="#000000"/><rect x="4" y="3" width="5" height="1" fill="#33DDDD"/><rect x="9" y="3" width="1" height="1" fill="#000000"/><rect x="10" y="3" width="3" height="1" fill="#E0D8B0"/><rect x="13" y="3" width="1" height="1" fill="#000000"/><rect x="1" y="4" width="1" height="1" fill="#808080"/><rect x="2" y="4" width="1" height="1" fill="#000000"/><rect x="3" y="4" width="1" height="1" fill="#33DDDD"/><rect x="4" y="4" width="1" height="1" fill="#FFFFFF"/><rect x="5" y="4" width="5" height="1" fill="#33DDDD"/><rect x="10" y="4" width="1" height="1" fill="#000000"/><rect x="11" y="4" width="2" height="1" fill="#E0D8B0"/><rect x="13" y="4" width="1" height="1" fill="#000000"/><rect x="1" y="5" width="1" height="1" fill="#808080"/><rect x="2" y="5" width="1" height="1" fill="#000000"/><rect x="3" y="5" width="8" height="1" fill="#33DDDD"/><rect x="11" y="5" width="1" height="1" fill="#000000"/><rect x="12" y="5" width="1" height="1" fill="#E0D8B0"/><rect x="13" y="5" width="1" height="1" fill="#000000"/><rect x="1" y="6" width="1" height="1" fill="#808080"/><rect x="2" y="6" width="1" height="1" fill="#000000"/><rect x="3" y="6" width="8" height="1" fill="#33DDDD"/><rect x="11" y="6" width="1" height="1" fill="#000000"/><rect x="12" y="6" width="1" height="1" fill="#E0D8B0"/><rect x="13" y="6" width="1" height="1" fill="#000000"/><rect x="1" y="7" width="1" height="1" fill="#808080"/><rect x="2" y="7" width="1" height="1" fill="#000000"/><rect x="3" y="7" width="8" height="1" fill="#33DDDD"/><rect x="11" y="7" width="1" height="1" fill="#000000"/><rect x="12" y="7" width="1" height="1" fill="#E0D8B0"/><rect x="13" y="7" width="1" height="1" fill="#000000"/><rect x="1" y="8" width="1" height="1" fill="#808080"/><rect x="2" y="8" width="1" height="1" fill="#E0D8B0"/><rect x="3" y="8" width="1" height="1" fill="#000000"/><rect x="4" y="8" width="6" height="1" fill="#33DDDD"/><rect x="10" y="8" width="2" height="1" fill="#000000"/><rect x="12" y="8" width="1" height="1" fill="#E0D8B0"/><rect x="13" y="8" width="1" height="1" fill="#000000"/><rect x="1" y="9" width="1" height="1" fill="#808080"/><rect x="2" y="9" width="2" height="1" fill="#E0D8B0"/><rect x="4" y="9" width="6" height="1" fill="#000000"/><rect x="10" y="9" width="2" height="1" fill="#000080"/><rect x="12" y="9" width="1" height="1" fill="#E0D8B0"/><rect x="13" y="9" width="1" height="1" fill="#000000"/><rect x="1" y="10" width="1" height="1" fill="#808080"/><rect x="2" y="10" width="8" height="1" fill="#E0D8B0"/><rect x="10" y="10" width="3" height="1" fill="#000080"/><rect x="13" y="10" width="1" height="1" fill="#000000"/><rect x="1" y="11" width="10" height="1" fill="#000000"/><rect x="11" y="11" width="3" height="1" fill="#000080"/><rect x="14" y="11" width="1" height="1" fill="#000000"/><rect x="12" y="12" width="1" height="1" fill="#000080"/><rect x="13" y="12" width="2" height="1" fill="#000000"/><rect x="13" y="13" width="2" height="1" fill="#000000"/></svg>
<svg style="left:286px;top:53px" width="16" height="14" shape-rendering="crispEdges"><rect x="0" y="0" width="15" height="1" fill="#000000"/><rect x="0" y="1" width="1" height="1" fill="#000000"/><rect x="1" y="1" width="13" height="1" fill="#FFFFFF"/><rect x="14" y="1" width="1" height="1" fill="#000000"/><rect x="0" y="2" width="1" height="1" fill="#000000"/><rect x="1" y="2" width="1" height="1" fill="#FFFFFF"/><rect x="2" y="2" width="2" height="1" fill="#000000"/><rect x="4" y="2" width="10" height="1" fill="#FFFFFF"/><rect x="14" y="2" width="1" height="1" fill="#000000"/><rect x="0" y="3" width="1" height="1" fill="#000000"/><rect x="1" y="3" width="1" height="1" fill="#FFFFFF"/><rect x="2" y="3" width="2" height="1" fill="#000000"/><rect x="4" y="3" width="1" height="1" fill="#FFFFFF"/><rect x="5" y="3" width="1" height="1" fill="#000000"/><rect x="6" y="3" width="2" height="1" fill="#FFFFFF"/><rect x="8" y="3" width="4" height="1" fill="#000000"/><rect x="12" y="3" width="2" height="1" fill="#FFFFFF"/><rect x="14" y="3" width="1" height="1" fill="#000000"/><rect x="0" y="4" width="1" height="1" fill="#000000"/><rect x="1" y="4" width="3" height="1" fill="#FFFFFF"/><rect x="4" y="4" width="1" height="1" fill="#000000"/><rect x="5" y="4" width="9" height="1" fill="#FFFFFF"/><rect x="14" y="4" width="1" height="1" fill="#000000"/><rect x="0" y="5" width="1" height="1" fill="#000000"/><rect x="1" y="5" width="1" height="1" fill="#FFFFFF"/><rect x="2" y="5" width="3" height="1" fill="#000000"/><rect x="5" y="5" width="9" height="1" fill="#FFFFFF"/><rect x="14" y="5" width="1" height="1" fill="#000000"/><rect x="0" y="6" width="1" height="1" fill="#000000"/><rect x="1" y="6" width="13" height="1" fill="#FFFFFF"/><rect x="14" y="6" width="1" height="1" fill="#000000"/><rect x="0" y="7" width="1" height="1" fill="#000000"/><rect x="1" y="7" width="1" height="1" fill="#FFFFFF"/><rect x="2" y="7" width="3" height="1" fill="#000000"/><rect x="5" y="7" width="2" height="1" fill="#FFFFFF"/><rect x="7" y="7" width="1" height="1" fill="#000000"/><rect x="8" y="7" width="1" height="1" fill="#FFFF00"/><rect x="9" y="7" width="2" height="1" fill="#000000"/><rect x="11" y="7" width="2" height="1" fill="#FFFF00"/><rect x="13" y="7" width="1" height="1" fill="#FFFFFF"/><rect x="14" y="7" width="1" height="1" fill="#000000"/><rect x="0" y="8" width="1" height="1" fill="#000000"/><rect x="1" y="8" width="1" height="1" fill="#FFFFFF"/><rect x="2" y="8" width="3" height="1" fill="#000000"/><rect x="5" y="8" width="2" height="1" fill="#FFFFFF"/><rect x="7" y="8" width="6" height="1" fill="#FFFF00"/><rect x="13" y="8" width="2" height="1" fill="#000000"/><rect x="0" y="9" width="1" height="1" fill="#000000"/><rect x="1" y="9" width="5" height="1" fill="#FFFFFF"/><rect x="6" y="9" width="1" height="1" fill="#000000"/><rect x="7" y="9" width="2" height="1" fill="#FFFF00"/><rect x="9" y="9" width="2" height="1" fill="#000000"/><rect x="11" y="9" width="2" height="1" fill="#FFFF00"/><rect x="13" y="9" width="1" height="1" fill="#000000"/><rect x="0" y="10" width="1" height="1" fill="#000000"/><rect x="1" y="10" width="5" height="1" fill="#FFFFFF"/><rect x="6" y="10" width="3" height="1" fill="#FFFF00"/><rect x="9" y="10" width="2" height="1" fill="#000000"/><rect x="11" y="10" width="3" height="1" fill="#FFFF00"/><rect x="14" y="10" width="1" height="1" fill="#000000"/><rect x="0" y="11" width="7" height="1" fill="#000000"/><rect x="7" y="11" width="6" height="1" fill="#FFFF00"/><rect x="13" y="11" width="1" height="1" fill="#000000"/><rect x="6" y="12" width="1" height="1" fill="#000000"/><rect x="7" y="12" width="1" height="1" fill="#FFFF00"/><rect x="8" y="12" width="2" height="1" fill="#000000"/><rect x="10" y="12" width="1" height="1" fill="#FFFF00"/><rect x="11" y="12" width="2" height="1" fill="#000000"/><rect x="13" y="12" width="1" height="1" fill="#FFFF00"/><rect x="14" y="12" width="1" height="1" fill="#000000"/><rect x="7" y="13" width="1" height="1" fill="#000000"/><rect x="10" y="13" width="1" height="1" fill="#000000"/><rect x="13" y="13" width="1" height="1" fill="#000000"/></svg>
<div style="left:4px;top:76px;width:200px;height:499px;background:#FFFFFF;"></div>
<div style="left:4px;top:76px;width:200px;height:1px;background:#808080;"></div>
<div style="left:4px;top:76px;width:1px;height:499px;background:#808080;"></div>
<div style="left:4px;top:574px;width:200px;height:1px;background:#FFFFFF;"></div>
<div style="left:203px;top:76px;width:1px;height:499px;background:#FFFFFF;"></div>
<div style="left:5px;top:77px;width:198px;height:1px;background:#404040;"></div>
<div style="left:5px;top:77px;width:1px;height:497px;background:#404040;"></div>
<div style="left:5px;top:573px;width:198px;height:1px;background:#D4D0C8;"></div>
<div style="left:202px;top:77px;width:1px;height:497px;background:#D4D0C8;"></div>
<div style="left:6px;top:78px;width:196px;height:479px;overflow:hidden">
<div style="left:11px;top:16px;width:1px;height:165px;background:repeating-linear-gradient(to bottom,#808080 0 1px,transparent 1px 2px);"></div>
<div style="left:30px;top:32px;width:1px;height:73px;background:repeating-linear-gradient(to bottom,#808080 0 1px,transparent 1px 2px);"></div>
<div style="left:30px;top:128px;width:1px;height:41px;background:repeating-linear-gradient(to bottom,#808080 0 1px,transparent 1px 2px);"></div>
<div style="left:59px;top:160px;width:93px;height:16px;background:#D4D0C8;"></div>
<span style="left:23.66px;top:3px;transform:scaleX(0.9689);transform-origin:0 0;color:#000;">Computer Management (Local)</span>
<svg style="left:3px;top:0px" width="16" height="15" shape-rendering="crispEdges"><rect x="2" y="0" width="11" height="1" fill="#FFFFFF"/><rect x="13" y="0" width="1" height="1" fill="#808080"/><rect x="1" y="1" width="1" height="1" fill="#FFFFFF"/><rect x="2" y="1" width="12" height="1" fill="#C0C0C0"/><rect x="14" y="1" width="1" height="1" fill="#000000"/><rect x="1" y="2" width="1" height="1" fill="#FFFFFF"/><rect x="2" y="2" width="1" height="1" fill="#C0C0C0"/><rect x="3" y="2" width="9" height="1" fill="#000000"/><rect x="12" y="2" width="1" height="1" fill="#FFFFFF"/><rect x="13" y="2" width="1" height="1" fill="#C0C0C0"/><rect x="14" y="2" width="1" height="1" fill="#000000"/><rect x="1" y="3" width="1" height="1" fill="#FFFFFF"/><rect x="2" y="3" width="1" height="1" fill="#C0C0C0"/><rect x="3" y="3" width="1" height="1" fill="#000000"/><rect x="4" y="3" width="8" height="1" fill="#0000FF"/><rect x="12" y="3" width="1" height="1" fill="#FFFFFF"/><rect x="13" y="3" width="1" height="1" fill="#C0C0C0"/><rect x="14" y="3" width="1" height="1" fill="#000000"/><rect x="1" y="4" width="1" height="1" fill="#FFFFFF"/><rect x="2" y="4" width="1" height="1" fill="#C0C0C0"/><rect x="3" y="4" width="1" height="1" fill="#000000"/><rect x="4" y="4" width="8" height="1" fill="#0000FF"/><rect x="12" y="4" width="1" height="1" fill="#FFFFFF"/><rect x="13" y="4" width="1" height="1" fill="#C0C0C0"/><rect x="14" y="4" width="1" height="1" fill="#000000"/><rect x="1" y="5" width="1" height="1" fill="#FFFFFF"/><rect x="2" y="5" width="1" height="1" fill="#C0C0C0"/><rect x="3" y="5" width="1" height="1" fill="#000000"/><rect x="4" y="5" width="8" height="1" fill="#0000FF"/><rect x="12" y="5" width="1" height="1" fill="#FFFFFF"/><rect x="13" y="5" width="1" height="1" fill="#C0C0C0"/><rect x="14" y="5" width="1" height="1" fill="#000000"/><rect x="1" y="6" width="1" height="1" fill="#FFFFFF"/><rect x="2" y="6" width="1" height="1" fill="#C0C0C0"/><rect x="3" y="6" width="1" height="1" fill="#000000"/><rect x="4" y="6" width="8" height="1" fill="#0000FF"/><rect x="12" y="6" width="1" height="1" fill="#FFFFFF"/><rect x="13" y="6" width="1" height="1" fill="#C0C0C0"/><rect x="14" y="6" width="1" height="1" fill="#000000"/><rect x="1" y="7" width="1" height="1" fill="#FFFFFF"/><rect x="2" y="7" width="1" height="1" fill="#C0C0C0"/><rect x="3" y="7" width="1" height="1" fill="#000000"/><rect x="4" y="7" width="8" height="1" fill="#0000FF"/><rect x="12" y="7" width="1" height="1" fill="#FFFFFF"/><rect x="13" y="7" width="1" height="1" fill="#C0C0C0"/><rect x="14" y="7" width="1" height="1" fill="#000000"/><rect x="1" y="8" width="1" height="1" fill="#FFFFFF"/><rect x="2" y="8" width="1" height="1" fill="#C0C0C0"/><rect x="3" y="8" width="10" height="1" fill="#FFFFFF"/><rect x="13" y="8" width="1" height="1" fill="#C0C0C0"/><rect x="14" y="8" width="1" height="1" fill="#000000"/><rect x="1" y="9" width="14" height="1" fill="#000000"/><rect x="0" y="10" width="15" height="1" fill="#FFFFFF"/><rect x="15" y="10" width="1" height="1" fill="#808080"/><rect x="0" y="11" width="1" height="1" fill="#FFFFFF"/><rect x="1" y="11" width="13" height="1" fill="#C0C0C0"/><rect x="14" y="11" width="1" height="1" fill="#808080"/><rect x="15" y="11" width="1" height="1" fill="#000000"/><rect x="0" y="12" width="1" height="1" fill="#FFFFFF"/><rect x="1" y="12" width="8" height="1" fill="#C0C0C0"/><rect x="9" y="12" width="4" height="1" fill="#000000"/><rect x="13" y="12" width="1" height="1" fill="#C0C0C0"/><rect x="14" y="12" width="1" height="1" fill="#808080"/><rect x="15" y="12" width="1" height="1" fill="#000000"/><rect x="0" y="13" width="1" height="1" fill="#FFFFFF"/><rect x="1" y="13" width="13" height="1" fill="#C0C0C0"/><rect x="14" y="13" width="1" height="1" fill="#808080"/><rect x="15" y="13" width="1" height="1" fill="#000000"/><rect x="0" y="14" width="16" height="1" fill="#000000"/></svg>
<div style="left:17px;top:24px;width:4px;height:1px;background:repeating-linear-gradient(to right,#808080 0 1px,transparent 1px 2px);"></div>
<div style="left:7px;top:20px;width:9px;height:9px;background:#fff;"></div>
<div style="left:7px;top:20px;width:9px;height:1px;background:#808080;"></div>
<div style="left:7px;top:28px;width:9px;height:1px;background:#808080;"></div>
<div style="left:7px;top:20px;width:1px;height:9px;background:#808080;"></div>
<div style="left:15px;top:20px;width:1px;height:9px;background:#808080;"></div>
<div style="left:9px;top:24px;width:5px;height:1px;background:#000;"></div>
<span style="left:42.72px;top:19px;transform:scaleX(0.9656);transform-origin:0 0;color:#000;">System Tools</span>
<svg style="left:22px;top:16px" width="16" height="16" shape-rendering="crispEdges"><rect x="5" y="0" width="7" height="1" fill="#808080"/><rect x="4" y="1" width="10" height="1" fill="#000000"/><rect x="1" y="2" width="1" height="1" fill="#FFFFFF"/><rect x="2" y="2" width="1" height="1" fill="#000000"/><rect x="4" y="2" width="1" height="1" fill="#000000"/><rect x="5" y="2" width="1" height="1" fill="#FFFFFF"/><rect x="6" y="2" width="4" height="1" fill="#000000"/><rect x="12" y="2" width="3" height="1" fill="#000000"/><rect x="0" y="3" width="1" height="1" fill="#000000"/><rect x="1" y="3" width="1" height="1" fill="#FFFFFF"/><rect x="2" y="3" width="1" height="1" fill="#000000"/><rect x="3" y="3" width="1" height="1" fill="#FFFFFF"/><rect x="4" y="3" width="2" height="1" fill="#000000"/><rect x="6" y="3" width="1" height="1" fill="#FFFFFF"/><rect x="7" y="3" width="1" height="1" fill="#000000"/><rect x="8" y="3" width="1" height="1" fill="#2020A0"/><rect x="9" y="3" width="1" height="1" fill="#000000"/><rect x="13" y="3" width="1" height="1" fill="#000000"/><rect x="1" y="4" width="1" height="1" fill="#000000"/><rect x="2" y="4" width="1" height="1" fill="#FFFFFF"/><rect x="3" y="4" width="1" height="1" fill="#000000"/><rect x="4" y="4" width="1" height="1" fill="#C000C0"/><rect x="5" y="4" width="1" height="1" fill="#FFFFFF"/><rect x="6" y="4" width="1" height="1" fill="#000000"/><rect x="7" y="4" width="1" height="1" fill="#2020A0"/><rect x="8" y="4" width="1" height="1" fill="#A8C8F0"/><rect x="9" y="4" width="1" height="1" fill="#000000"/><rect x="1" y="5" width="1" height="1" fill="#FFFFFF"/><rect x="2" y="5" width="2" height="1" fill="#000000"/><rect x="4" y="5" width="1" height="1" fill="#C000C0"/><rect x="5" y="5" width="1" height="1" fill="#FFFFFF"/><rect x="6" y="5" width="1" height="1" fill="#000000"/><rect x="7" y="5" width="1" height="1" fill="#2020A0"/><rect x="8" y="5" width="1" height="1" fill="#A8C8F0"/><rect x="9" y="5" width="1" height="1" fill="#000000"/><rect x="1" y="6" width="1" height="1" fill="#000000"/><rect x="2" y="6" width="1" height="1" fill="#FFFFFF"/><rect x="3" y="6" width="1" height="1" fill="#000000"/><rect x="4" y="6" width="2" height="1" fill="#C000C0"/><rect x="6" y="6" width="1" height="1" fill="#000000"/><rect x="7" y="6" width="1" height="1" fill="#2020A0"/><rect x="8" y="6" width="1" height="1" fill="#A8C8F0"/><rect x="9" y="6" width="1" height="1" fill="#000000"/><rect x="1" y="7" width="1" height="1" fill="#808080"/><rect x="2" y="7" width="1" height="1" fill="#FFFFFF"/><rect x="3" y="7" width="1" height="1" fill="#000000"/><rect x="4" y="7" width="1" height="1" fill="#C00000"/><rect x="5" y="7" width="1" height="1" fill="#C000C0"/><rect x="6" y="7" width="1" height="1" fill="#000000"/><rect x="7" y="7" width="1" height="1" fill="#2020A0"/><rect x="8" y="7" width="1" height="1" fill="#A8C8F0"/><rect x="9" y="7" width="1" height="1" fill="#000000"/><rect x="1" y="8" width="1" height="1" fill="#808080"/><rect x="2" y="8" width="1" height="1" fill="#00A040"/><rect x="3" y="8" width="1" height="1" fill="#000000"/><rect x="4" y="8" width="2" height="1" fill="#C00000"/><rect x="6" y="8" width="1" height="1" fill="#000000"/><rect x="7" y="8" width="2" height="1" fill="#2020A0"/><rect x="9" y="8" width="1" height="1" fill="#000000"/><rect x="11" y="8" width="1" height="1" fill="#E8E070"/><rect x="12" y="8" width="1" height="1" fill="#000000"/><rect x="1" y="9" width="2" height="1" fill="#00A040"/><rect x="3" y="9" width="1" height="1" fill="#000000"/><rect x="4" y="9" width="2" height="1" fill="#C00000"/><rect x="6" y="9" width="1" height="1" fill="#000000"/><rect x="7" y="9" width="1" height="1" fill="#2020A0"/><rect x="8" y="9" width="1" height="1" fill="#000000"/><rect x="9" y="9" width="2" height="1" fill="#E8E070"/><rect x="11" y="9" width="1" height="1" fill="#000000"/><rect x="12" y="9" width="2" height="1" fill="#E8E070"/><rect x="1" y="10" width="2" height="1" fill="#00A040"/><rect x="3" y="10" width="1" height="1" fill="#000000"/><rect x="4" y="10" width="2" height="1" fill="#C00000"/><rect x="6" y="10" width="2" height="1" fill="#000000"/><rect x="8" y="10" width="2" height="1" fill="#E8E070"/><rect x="10" y="10" width="1" height="1" fill="#000000"/><rect x="11" y="10" width="1" height="1" fill="#E8E070"/><rect x="12" y="10" width="1" height="1" fill="#000000"/><rect x="13" y="10" width="2" height="1" fill="#E8E070"/><rect x="15" y="10" width="1" height="1" fill="#000000"/><rect x="1" y="11" width="2" height="1" fill="#00A040"/><rect x="3" y="11" width="1" height="1" fill="#000000"/><rect x="4" y="11" width="2" height="1" fill="#C00000"/><rect x="6" y="11" width="2" height="1" fill="#E8E070"/><rect x="8" y="11" width="3" height="1" fill="#000000"/><rect x="11" y="11" width="2" height="1" fill="#E8E070"/><rect x="13" y="11" width="1" height="1" fill="#000000"/><rect x="14" y="11" width="1" height="1" fill="#E8E070"/><rect x="15" y="11" width="1" height="1" fill="#000000"/><rect x="1" y="12" width="2" height="1" fill="#00A040"/><rect x="3" y="12" width="1" height="1" fill="#000000"/><rect x="4" y="12" width="2" height="1" fill="#C00000"/><rect x="6" y="12" width="1" height="1" fill="#000000"/><rect x="7" y="12" width="2" height="1" fill="#E8E070"/><rect x="9" y="12" width="1" height="1" fill="#000000"/><rect x="10" y="12" width="4" height="1" fill="#E8E070"/><rect x="14" y="12" width="1" height="1" fill="#000000"/><rect x="1" y="13" width="2" height="1" fill="#00A040"/><rect x="3" y="13" width="1" height="1" fill="#000000"/><rect x="4" y="13" width="2" height="1" fill="#C00000"/><rect x="6" y="13" width="1" height="1" fill="#000000"/><rect x="7" y="13" width="3" height="1" fill="#E8E070"/><rect x="10" y="13" width="1" height="1" fill="#000000"/><rect x="11" y="13" width="2" height="1" fill="#E8E070"/><rect x="13" y="13" width="1" height="1" fill="#000000"/><rect x="14" y="13" width="1" height="1" fill="#E8E070"/><rect x="15" y="13" width="1" height="1" fill="#000000"/><rect x="1" y="14" width="2" height="1" fill="#00A040"/><rect x="3" y="14" width="2" height="1" fill="#C00000"/><rect x="5" y="14" width="2" height="1" fill="#000000"/><rect x="7" y="14" width="2" height="1" fill="#E8E070"/><rect x="9" y="14" width="2" height="1" fill="#000000"/><rect x="11" y="14" width="2" height="1" fill="#E8E070"/><rect x="13" y="14" width="1" height="1" fill="#000000"/><rect x="1" y="15" width="4" height="1" fill="#000000"/><rect x="7" y="15" width="2" height="1" fill="#000000"/><rect x="11" y="15" width="2" height="1" fill="#000000"/></svg>
<div style="left:36px;top:40px;width:4px;height:1px;background:repeating-linear-gradient(to right,#808080 0 1px,transparent 1px 2px);"></div>
<div style="left:26px;top:36px;width:9px;height:9px;background:#fff;"></div>
<div style="left:26px;top:36px;width:9px;height:1px;background:#808080;"></div>
<div style="left:26px;top:44px;width:9px;height:1px;background:#808080;"></div>
<div style="left:26px;top:36px;width:1px;height:9px;background:#808080;"></div>
<div style="left:34px;top:36px;width:1px;height:9px;background:#808080;"></div>
<div style="left:28px;top:40px;width:5px;height:1px;background:#000;"></div>
<div style="left:30px;top:38px;width:1px;height:5px;background:#000;"></div>
<span style="left:60.61px;top:35px;transform:scaleX(0.9901);transform-origin:0 0;color:#000;">Event Viewer</span>
<svg style="left:41px;top:32px" width="16" height="15" shape-rendering="crispEdges"><rect x="1" y="1" width="6" height="1" fill="#808080"/><rect x="0" y="2" width="1" height="1" fill="#808080"/><rect x="1" y="2" width="6" height="1" fill="#F4F0A0"/><rect x="7" y="2" width="1" height="1" fill="#808080"/><rect x="0" y="3" width="1" height="1" fill="#808080"/><rect x="1" y="3" width="7" height="1" fill="#F4F0A0"/><rect x="8" y="3" width="7" height="1" fill="#808080"/><rect x="15" y="3" width="1" height="1" fill="#000000"/><rect x="0" y="4" width="1" height="1" fill="#808080"/><rect x="1" y="4" width="14" height="1" fill="#F4F0A0"/><rect x="15" y="4" width="1" height="1" fill="#000000"/><rect x="0" y="5" width="1" height="1" fill="#808080"/><rect x="1" y="5" width="2" height="1" fill="#F4F0A0"/><rect x="3" y="5" width="9" height="1" fill="#000000"/><rect x="12" y="5" width="3" height="1" fill="#F4F0A0"/><rect x="15" y="5" width="1" height="1" fill="#000000"/><rect x="0" y="6" width="1" height="1" fill="#808080"/><rect x="1" y="6" width="1" height="1" fill="#F4F0A0"/><rect x="2" y="6" width="1" height="1" fill="#FFFF00"/><rect x="3" y="6" width="1" height="1" fill="#000000"/><rect x="4" y="6" width="7" height="1" fill="#FFFFFF"/><rect x="11" y="6" width="2" height="1" fill="#000000"/><rect x="13" y="6" width="2" height="1" fill="#F4F0A0"/><rect x="15" y="6" width="1" height="1" fill="#000000"/><rect x="0" y="7" width="1" height="1" fill="#808080"/><rect x="1" y="7" width="1" height="1" fill="#000000"/><rect x="2" y="7" width="1" height="1" fill="#FFFF00"/><rect x="3" y="7" width="1" height="1" fill="#000000"/><rect x="4" y="7" width="2" height="1" fill="#FFFFFF"/><rect x="6" y="7" width="2" height="1" fill="#C00000"/><rect x="8" y="7" width="1" height="1" fill="#FFFFFF"/><rect x="9" y="7" width="1" height="1" fill="#0000FF"/><rect x="10" y="7" width="1" height="1" fill="#FFFFFF"/><rect x="11" y="7" width="2" height="1" fill="#000000"/><rect x="13" y="7" width="2" height="1" fill="#F4F0A0"/><rect x="15" y="7" width="1" height="1" fill="#000000"/><rect x="0" y="8" width="1" height="1" fill="#808080"/><rect x="1" y="8" width="2" height="1" fill="#FFFF00"/><rect x="3" y="8" width="1" height="1" fill="#000000"/><rect x="4" y="8" width="1" height="1" fill="#FFFFFF"/><rect x="5" y="8" width="1" height="1" fill="#C00000"/><rect x="6" y="8" width="2" height="1" fill="#FFFFFF"/><rect x="8" y="8" width="1" height="1" fill="#C00000"/><rect x="9" y="8" width="1" height="1" fill="#0000FF"/><rect x="10" y="8" width="1" height="1" fill="#FFFFFF"/><rect x="11" y="8" width="2" height="1" fill="#000000"/><rect x="13" y="8" width="2" height="1" fill="#F4F0A0"/><rect x="15" y="8" width="1" height="1" fill="#000000"/><rect x="0" y="9" width="1" height="1" fill="#808080"/><rect x="1" y="9" width="1" height="1" fill="#000000"/><rect x="2" y="9" width="1" height="1" fill="#FFFF00"/><rect x="3" y="9" width="1" height="1" fill="#000000"/><rect x="4" y="9" width="1" height="1" fill="#FFFFFF"/><rect x="5" y="9" width="3" height="1" fill="#C00000"/><rect x="8" y="9" width="1" height="1" fill="#FFFFFF"/><rect x="9" y="9" width="1" height="1" fill="#0000FF"/><rect x="10" y="9" width="1" height="1" fill="#FFFFFF"/><rect x="11" y="9" width="2" height="1" fill="#000000"/><rect x="13" y="9" width="2" height="1" fill="#F4F0A0"/><rect x="15" y="9" width="1" height="1" fill="#000000"/><rect x="0" y="10" width="1" height="1" fill="#808080"/><rect x="1" y="10" width="2" height="1" fill="#FFFF00"/><rect x="3" y="10" width="1" height="1" fill="#000000"/><rect x="4" y="10" width="1" height="1" fill="#FFFFFF"/><rect x="5" y="10" width="1" height="1" fill="#C00000"/><rect x="6" y="10" width="2" height="1" fill="#FFFFFF"/><rect x="8" y="10" width="2" height="1" fill="#0000FF"/><rect x="10" y="10" width="1" height="1" fill="#FFFFFF"/><rect x="11" y="10" width="2" height="1" fill="#000000"/><rect x="13" y="10" width="2" height="1" fill="#F4F0A0"/><rect x="15" y="10" width="1" height="1" fill="#000000"/><rect x="0" y="11" width="1" height="1" fill="#808080"/><rect x="1" y="11" width="1" height="1" fill="#000000"/><rect x="2" y="11" width="1" height="1" fill="#FFFF00"/><rect x="3" y="11" width="1" height="1" fill="#000000"/><rect x="4" y="11" width="1" height="1" fill="#FFFFFF"/><rect x="5" y="11" width="1" height="1" fill="#C00000"/><rect x="6" y="11" width="5" height="1" fill="#FFFFFF"/><rect x="11" y="11" width="2" height="1" fill="#000000"/><rect x="13" y="11" width="2" height="1" fill="#F4F0A0"/><rect x="15" y="11" width="1" height="1" fill="#000000"/><rect x="0" y="12" width="1" height="1" fill="#808080"/><rect x="1" y="12" width="2" height="1" fill="#F4F0A0"/><rect x="3" y="12" width="10" height="1" fill="#000000"/><rect x="13" y="12" width="2" height="1" fill="#F4F0A0"/><rect x="15" y="12" width="1" height="1" fill="#000000"/><rect x="0" y="13" width="1" height="1" fill="#808080"/><rect x="1" y="13" width="3" height="1" fill="#F4F0A0"/><rect x="4" y="13" width="9" height="1" fill="#000000"/><rect x="13" y="13" width="2" height="1" fill="#F4F0A0"/><rect x="15" y="13" width="1" height="1" fill="#000000"/><rect x="0" y="14" width="16" height="1" fill="#000000"/></svg>
<div style="left:36px;top:56px;width:4px;height:1px;background:repeating-linear-gradient(to right,#808080 0 1px,transparent 1px 2px);"></div>
<div style="left:26px;top:52px;width:9px;height:9px;background:#fff;"></div>
<div style="left:26px;top:52px;width:9px;height:1px;background:#808080;"></div>
<div style="left:26px;top:60px;width:9px;height:1px;background:#808080;"></div>
<div style="left:26px;top:52px;width:1px;height:9px;background:#808080;"></div>
<div style="left:34px;top:52px;width:1px;height:9px;background:#808080;"></div>
<div style="left:28px;top:56px;width:5px;height:1px;background:#000;"></div>
<div style="left:30px;top:54px;width:1px;height:5px;background:#000;"></div>
<span style="left:61.01px;top:51px;transform:scaleX(0.9730);transform-origin:0 0;color:#000;">Shared Folders</span>
<svg style="left:41px;top:48px" width="16" height="16" shape-rendering="crispEdges"><rect x="2" y="1" width="5" height="1" fill="#808080"/><rect x="1" y="2" width="1" height="1" fill="#808080"/><rect x="2" y="2" width="5" height="1" fill="#F4F0A0"/><rect x="7" y="2" width="1" height="1" fill="#808080"/><rect x="1" y="3" width="1" height="1" fill="#808080"/><rect x="2" y="3" width="6" height="1" fill="#F4F0A0"/><rect x="8" y="3" width="7" height="1" fill="#808080"/><rect x="15" y="3" width="1" height="1" fill="#000000"/><rect x="1" y="4" width="1" height="1" fill="#808080"/><rect x="2" y="4" width="13" height="1" fill="#F4F0A0"/><rect x="15" y="4" width="1" height="1" fill="#000000"/><rect x="1" y="5" width="1" height="1" fill="#808080"/><rect x="2" y="5" width="13" height="1" fill="#F4F0A0"/><rect x="15" y="5" width="1" height="1" fill="#000000"/><rect x="1" y="6" width="1" height="1" fill="#808080"/><rect x="2" y="6" width="13" height="1" fill="#F4F0A0"/><rect x="15" y="6" width="1" height="1" fill="#000000"/><rect x="1" y="7" width="1" height="1" fill="#808080"/><rect x="2" y="7" width="13" height="1" fill="#F4F0A0"/><rect x="15" y="7" width="1" height="1" fill="#000000"/><rect x="1" y="8" width="1" height="1" fill="#808080"/><rect x="2" y="8" width="13" height="1" fill="#F4F0A0"/><rect x="15" y="8" width="1" height="1" fill="#000000"/><rect x="0" y="9" width="3" height="1" fill="#0000FF"/><rect x="3" y="9" width="12" height="1" fill="#F4F0A0"/><rect x="15" y="9" width="1" height="1" fill="#000000"/><rect x="0" y="10" width="1" height="1" fill="#0000FF"/><rect x="1" y="10" width="1" height="1" fill="#0000A0"/><rect x="2" y="10" width="2" height="1" fill="#0000FF"/><rect x="4" y="10" width="11" height="1" fill="#F4F0A0"/><rect x="15" y="10" width="1" height="1" fill="#000000"/><rect x="0" y="11" width="1" height="1" fill="#0000FF"/><rect x="1" y="11" width="2" height="1" fill="#0000A0"/><rect x="3" y="11" width="1" height="1" fill="#0000FF"/><rect x="4" y="11" width="6" height="1" fill="#000000"/><rect x="10" y="11" width="5" height="1" fill="#F4F0A0"/><rect x="15" y="11" width="1" height="1" fill="#000000"/><rect x="0" y="12" width="1" height="1" fill="#0000FF"/><rect x="1" y="12" width="2" height="1" fill="#0000A0"/><rect x="3" y="12" width="1" height="1" fill="#0000FF"/><rect x="4" y="12" width="6" height="1" fill="#FFFFFF"/><rect x="10" y="12" width="6" height="1" fill="#000000"/><rect x="0" y="13" width="3" height="1" fill="#0000FF"/><rect x="3" y="13" width="1" height="1" fill="#000000"/><rect x="4" y="13" width="9" height="1" fill="#FFFFFF"/><rect x="13" y="13" width="1" height="1" fill="#000000"/><rect x="3" y="14" width="2" height="1" fill="#000000"/><rect x="5" y="14" width="5" height="1" fill="#FFFFFF"/><rect x="10" y="14" width="3" height="1" fill="#000000"/><rect x="4" y="15" width="6" height="1" fill="#000000"/></svg>
<div style="left:36px;top:72px;width:4px;height:1px;background:repeating-linear-gradient(to right,#808080 0 1px,transparent 1px 2px);"></div>
<div style="left:26px;top:68px;width:9px;height:9px;background:#fff;"></div>
<div style="left:26px;top:68px;width:9px;height:1px;background:#808080;"></div>
<div style="left:26px;top:76px;width:9px;height:1px;background:#808080;"></div>
<div style="left:26px;top:68px;width:1px;height:9px;background:#808080;"></div>
<div style="left:34px;top:68px;width:1px;height:9px;background:#808080;"></div>
<div style="left:28px;top:72px;width:5px;height:1px;background:#000;"></div>
<div style="left:30px;top:70px;width:1px;height:5px;background:#000;"></div>
<span style="left:60.64px;top:67px;transform:scaleX(0.9529);transform-origin:0 0;color:#000;">Local Users and Groups</span>
<svg style="left:41px;top:64px" width="16" height="15" shape-rendering="crispEdges"><rect x="7" y="0" width="5" height="1" fill="#000000"/><rect x="3" y="1" width="3" height="1" fill="#FFFFFF"/><rect x="6" y="1" width="9" height="1" fill="#000000"/><rect x="2" y="2" width="4" height="1" fill="#FFFFFF"/><rect x="6" y="2" width="9" height="1" fill="#000000"/><rect x="2" y="3" width="3" height="1" fill="#FFFFFF"/><rect x="5" y="3" width="6" height="1" fill="#000000"/><rect x="11" y="3" width="2" height="1" fill="#FFFFFF"/><rect x="13" y="3" width="1" height="1" fill="#000000"/><rect x="1" y="4" width="3" height="1" fill="#FFFFFF"/><rect x="4" y="4" width="6" height="1" fill="#000000"/><rect x="10" y="4" width="4" height="1" fill="#FFFFFF"/><rect x="14" y="4" width="1" height="1" fill="#0000FF"/><rect x="1" y="5" width="2" height="1" fill="#C000C0"/><rect x="3" y="5" width="6" height="1" fill="#000000"/><rect x="9" y="5" width="6" height="1" fill="#FFFFFF"/><rect x="15" y="5" width="1" height="1" fill="#000000"/><rect x="1" y="6" width="3" height="1" fill="#C000C0"/><rect x="4" y="6" width="5" height="1" fill="#000000"/><rect x="9" y="6" width="5" height="1" fill="#FFFFFF"/><rect x="14" y="6" width="1" height="1" fill="#000000"/><rect x="1" y="7" width="2" height="1" fill="#C000C0"/><rect x="3" y="7" width="1" height="1" fill="#FFFF00"/><rect x="4" y="7" width="5" height="1" fill="#000000"/><rect x="9" y="7" width="4" height="1" fill="#FFFFFF"/><rect x="13" y="7" width="1" height="1" fill="#000000"/><rect x="3" y="8" width="3" height="1" fill="#FFFF00"/><rect x="6" y="8" width="3" height="1" fill="#000000"/><rect x="9" y="8" width="4" height="1" fill="#FFFFFF"/><rect x="13" y="8" width="2" height="1" fill="#000000"/><rect x="1" y="9" width="3" height="1" fill="#000000"/><rect x="4" y="9" width="3" height="1" fill="#FFFF00"/><rect x="7" y="9" width="3" height="1" fill="#000000"/><rect x="10" y="9" width="2" height="1" fill="#FFFFFF"/><rect x="12" y="9" width="1" height="1" fill="#000000"/><rect x="1" y="10" width="1" height="1" fill="#E8E8E8"/><rect x="2" y="10" width="4" height="1" fill="#00A040"/><rect x="6" y="10" width="2" height="1" fill="#FFFF00"/><rect x="8" y="10" width="3" height="1" fill="#000000"/><rect x="11" y="10" width="2" height="1" fill="#FFFFFF"/><rect x="13" y="10" width="3" height="1" fill="#0000FF"/><rect x="1" y="11" width="5" height="1" fill="#00A040"/><rect x="6" y="11" width="2" height="1" fill="#000000"/><rect x="8" y="11" width="3" height="1" fill="#FFFFFF"/><rect x="11" y="11" width="5" height="1" fill="#0000FF"/><rect x="1" y="12" width="4" height="1" fill="#00A040"/><rect x="5" y="12" width="3" height="1" fill="#000000"/><rect x="8" y="12" width="3" height="1" fill="#FFFFFF"/><rect x="11" y="12" width="1" height="1" fill="#0000FF"/><rect x="12" y="12" width="1" height="1" fill="#FFFFFF"/><rect x="13" y="12" width="2" height="1" fill="#0000FF"/><rect x="1" y="13" width="1" height="1" fill="#00A040"/><rect x="2" y="13" width="8" height="1" fill="#FFFFFF"/><rect x="10" y="13" width="1" height="1" fill="#FFFF00"/><rect x="11" y="13" width="3" height="1" fill="#A8A8E8"/><rect x="14" y="13" width="1" height="1" fill="#000000"/><rect x="1" y="14" width="14" height="1" fill="#000000"/></svg>
<div style="left:36px;top:88px;width:4px;height:1px;background:repeating-linear-gradient(to right,#808080 0 1px,transparent 1px 2px);"></div>
<div style="left:26px;top:84px;width:9px;height:9px;background:#fff;"></div>
<div style="left:26px;top:84px;width:9px;height:1px;background:#808080;"></div>
<div style="left:26px;top:92px;width:9px;height:1px;background:#808080;"></div>
<div style="left:26px;top:84px;width:1px;height:9px;background:#808080;"></div>
<div style="left:34px;top:84px;width:1px;height:9px;background:#808080;"></div>
<div style="left:28px;top:88px;width:5px;height:1px;background:#000;"></div>
<div style="left:30px;top:86px;width:1px;height:5px;background:#000;"></div>
<span style="left:60.60px;top:83px;color:#000;letter-spacing:-0.2px">Performance Logs and Alerts</span>
<svg style="left:41px;top:80px" width="16" height="16" shape-rendering="crispEdges"><rect x="4" y="1" width="12" height="1" fill="#000000"/><rect x="3" y="2" width="2" height="1" fill="#000000"/><rect x="5" y="2" width="10" height="1" fill="#FFFFFF"/><rect x="15" y="2" width="1" height="1" fill="#000000"/><rect x="4" y="3" width="1" height="1" fill="#000000"/><rect x="5" y="3" width="2" height="1" fill="#FFFFFF"/><rect x="7" y="3" width="1" height="1" fill="#0000FF"/><rect x="8" y="3" width="3" height="1" fill="#FFFFFF"/><rect x="11" y="3" width="1" height="1" fill="#0000FF"/><rect x="12" y="3" width="1" height="1" fill="#FFFFFF"/><rect x="13" y="3" width="1" height="1" fill="#0000FF"/><rect x="14" y="3" width="1" height="1" fill="#FFFFFF"/><rect x="15" y="3" width="1" height="1" fill="#000000"/><rect x="3" y="4" width="2" height="1" fill="#000000"/><rect x="5" y="4" width="3" height="1" fill="#FFFFFF"/><rect x="8" y="4" width="1" height="1" fill="#0000FF"/><rect x="9" y="4" width="1" height="1" fill="#FFFFFF"/><rect x="10" y="4" width="1" height="1" fill="#0000FF"/><rect x="11" y="4" width="1" height="1" fill="#FFFFFF"/><rect x="12" y="4" width="1" height="1" fill="#0000FF"/><rect x="13" y="4" width="2" height="1" fill="#FFFFFF"/><rect x="15" y="4" width="1" height="1" fill="#000000"/><rect x="4" y="5" width="1" height="1" fill="#000000"/><rect x="5" y="5" width="4" height="1" fill="#FFFFFF"/><rect x="9" y="5" width="1" height="1" fill="#0000FF"/><rect x="10" y="5" width="2" height="1" fill="#FFFFFF"/><rect x="12" y="5" width="1" height="1" fill="#C00000"/><rect x="13" y="5" width="2" height="1" fill="#FFFFFF"/><rect x="15" y="5" width="1" height="1" fill="#000000"/><rect x="3" y="6" width="2" height="1" fill="#000000"/><rect x="5" y="6" width="5" height="1" fill="#FFFFFF"/><rect x="10" y="6" width="2" height="1" fill="#C00000"/><rect x="12" y="6" width="1" height="1" fill="#FFFFFF"/><rect x="13" y="6" width="1" height="1" fill="#C00000"/><rect x="14" y="6" width="1" height="1" fill="#FFFFFF"/><rect x="15" y="6" width="1" height="1" fill="#000000"/><rect x="2" y="7" width="1" height="1" fill="#000000"/><rect x="4" y="7" width="1" height="1" fill="#000000"/><rect x="5" y="7" width="1" height="1" fill="#FFFFFF"/><rect x="6" y="7" width="1" height="1" fill="#00A040"/><rect x="7" y="7" width="1" height="1" fill="#FFFFFF"/><rect x="8" y="7" width="1" height="1" fill="#000000"/><rect x="9" y="7" width="1" height="1" fill="#C00000"/><rect x="10" y="7" width="1" height="1" fill="#FFFFFF"/><rect x="11" y="7" width="1" height="1" fill="#C00000"/><rect x="12" y="7" width="1" height="1" fill="#FFFFFF"/><rect x="13" y="7" width="1" height="1" fill="#C00000"/><rect x="14" y="7" width="1" height="1" fill="#FFFFFF"/><rect x="15" y="7" width="1" height="1" fill="#000000"/><rect x="1" y="8" width="1" height="1" fill="#000000"/><rect x="2" y="8" width="1" height="1" fill="#FFFF00"/><rect x="3" y="8" width="2" height="1" fill="#000000"/><rect x="5" y="8" width="1" height="1" fill="#FFFF00"/><rect x="6" y="8" width="1" height="1" fill="#00A040"/><rect x="7" y="8" width="1" height="1" fill="#000000"/><rect x="8" y="8" width="1" height="1" fill="#FFFF00"/><rect x="9" y="8" width="2" height="1" fill="#C00000"/><rect x="11" y="8" width="2" height="1" fill="#FFFFFF"/><rect x="13" y="8" width="1" height="1" fill="#C00000"/><rect x="14" y="8" width="1" height="1" fill="#FFFFFF"/><rect x="15" y="8" width="1" height="1" fill="#000000"/><rect x="0" y="9" width="1" height="1" fill="#000000"/><rect x="1" y="9" width="8" height="1" fill="#FFFF00"/><rect x="9" y="9" width="2" height="1" fill="#FFFFFF"/><rect x="11" y="9" width="1" height="1" fill="#C00000"/><rect x="12" y="9" width="3" height="1" fill="#FFFFFF"/><rect x="15" y="9" width="1" height="1" fill="#000000"/><rect x="0" y="10" width="1" height="1" fill="#000000"/><rect x="1" y="10" width="2" height="1" fill="#FFFF00"/><rect x="3" y="10" width="3" height="1" fill="#000000"/><rect x="6" y="10" width="4" height="1" fill="#FFFF00"/><rect x="10" y="10" width="2" height="1" fill="#FFFFFF"/><rect x="12" y="10" width="1" height="1" fill="#C00000"/><rect x="13" y="10" width="2" height="1" fill="#FFFFFF"/><rect x="15" y="10" width="1" height="1" fill="#000000"/><rect x="1" y="11" width="2" height="1" fill="#FFFF00"/><rect x="3" y="11" width="1" height="1" fill="#000000"/><rect x="4" y="11" width="1" height="1" fill="#FFFFFF"/><rect x="5" y="11" width="1" height="1" fill="#000000"/><rect x="6" y="11" width="3" height="1" fill="#FFFF00"/><rect x="9" y="11" width="6" height="1" fill="#FFFFFF"/><rect x="15" y="11" width="1" height="1" fill="#000000"/><rect x="0" y="12" width="1" height="1" fill="#000000"/><rect x="1" y="12" width="2" height="1" fill="#FFFF00"/><rect x="3" y="12" width="3" height="1" fill="#000000"/><rect x="6" y="12" width="3" height="1" fill="#FFFF00"/><rect x="9" y="12" width="1" height="1" fill="#C00000"/><rect x="10" y="12" width="5" height="1" fill="#FFFFFF"/><rect x="15" y="12" width="1" height="1" fill="#000000"/><rect x="1" y="13" width="1" height="1" fill="#000000"/><rect x="2" y="13" width="7" height="1" fill="#FFFF00"/><rect x="9" y="13" width="7" height="1" fill="#000000"/><rect x="2" y="14" width="1" height="1" fill="#000000"/><rect x="3" y="14" width="1" height="1" fill="#FFFF00"/><rect x="4" y="14" width="3" height="1" fill="#000000"/><rect x="7" y="14" width="1" height="1" fill="#FFFF00"/><rect x="8" y="14" width="2" height="1" fill="#000000"/><rect x="3" y="15" width="1" height="1" fill="#000000"/><rect x="7" y="15" width="1" height="1" fill="#000000"/></svg>
<div style="left:31px;top:104px;width:9px;height:1px;background:repeating-linear-gradient(to right,#808080 0 1px,transparent 1px 2px);"></div>
<span style="left:60.62px;top:99px;transform:scaleX(0.9733);transform-origin:0 0;color:#000;">Device Manager</span>
<svg style="left:41px;top:96px" width="16" height="16" shape-rendering="crispEdges"><rect x="5" y="0" width="4" height="1" fill="#000000"/><rect x="3" y="1" width="10" height="1" fill="#808080"/><rect x="13" y="1" width="1" height="1" fill="#000000"/><rect x="3" y="2" width="1" height="1" fill="#808080"/><rect x="4" y="2" width="8" height="1" fill="#FFFFFF"/><rect x="12" y="2" width="1" height="1" fill="#808080"/><rect x="13" y="2" width="1" height="1" fill="#000000"/><rect x="3" y="3" width="1" height="1" fill="#808080"/><rect x="4" y="3" width="1" height="1" fill="#FFFFFF"/><rect x="5" y="3" width="6" height="1" fill="#000080"/><rect x="11" y="3" width="1" height="1" fill="#FFFFFF"/><rect x="12" y="3" width="1" height="1" fill="#808080"/><rect x="13" y="3" width="1" height="1" fill="#000000"/><rect x="3" y="4" width="1" height="1" fill="#808080"/><rect x="4" y="4" width="1" height="1" fill="#FFFFFF"/><rect x="5" y="4" width="1" height="1" fill="#000080"/><rect x="6" y="4" width="4" height="1" fill="#0000FF"/><rect x="10" y="4" width="1" height="1" fill="#000080"/><rect x="11" y="4" width="1" height="1" fill="#FFFFFF"/><rect x="12" y="4" width="1" height="1" fill="#808080"/><rect x="13" y="4" width="1" height="1" fill="#000000"/><rect x="3" y="5" width="1" height="1" fill="#808080"/><rect x="4" y="5" width="1" height="1" fill="#FFFFFF"/><rect x="5" y="5" width="1" height="1" fill="#000080"/><rect x="6" y="5" width="4" height="1" fill="#0000FF"/><rect x="10" y="5" width="1" height="1" fill="#000080"/><rect x="11" y="5" width="1" height="1" fill="#FFFFFF"/><rect x="12" y="5" width="1" height="1" fill="#808080"/><rect x="13" y="5" width="1" height="1" fill="#000000"/><rect x="3" y="6" width="1" height="1" fill="#808080"/><rect x="4" y="6" width="1" height="1" fill="#FFFFFF"/><rect x="5" y="6" width="6" height="1" fill="#000080"/><rect x="11" y="6" width="1" height="1" fill="#FFFFFF"/><rect x="12" y="6" width="1" height="1" fill="#808080"/><rect x="13" y="6" width="1" height="1" fill="#000000"/><rect x="3" y="7" width="1" height="1" fill="#808080"/><rect x="4" y="7" width="8" height="1" fill="#FFFFFF"/><rect x="12" y="7" width="1" height="1" fill="#808080"/><rect x="13" y="7" width="1" height="1" fill="#000000"/><rect x="3" y="8" width="11" height="1" fill="#000000"/><rect x="4" y="9" width="8" height="1" fill="#808080"/><rect x="12" y="9" width="1" height="1" fill="#000000"/><rect x="2" y="10" width="1" height="1" fill="#000000"/><rect x="3" y="10" width="1" height="1" fill="#FFFFFF"/><rect x="4" y="10" width="1" height="1" fill="#000000"/><rect x="5" y="10" width="1" height="1" fill="#FFFFFF"/><rect x="6" y="10" width="1" height="1" fill="#000000"/><rect x="7" y="10" width="1" height="1" fill="#FFFFFF"/><rect x="8" y="10" width="1" height="1" fill="#000000"/><rect x="9" y="10" width="1" height="1" fill="#FFFFFF"/><rect x="10" y="10" width="1" height="1" fill="#000000"/><rect x="11" y="10" width="1" height="1" fill="#FFFFFF"/><rect x="12" y="10" width="2" height="1" fill="#000000"/><rect x="1" y="11" width="13" height="1" fill="#000000"/><rect x="0" y="12" width="1" height="1" fill="#000000"/><rect x="1" y="12" width="12" height="1" fill="#FFFFFF"/><rect x="13" y="12" width="2" height="1" fill="#000000"/><rect x="0" y="13" width="12" height="1" fill="#000000"/><rect x="12" y="13" width="3" height="1" fill="#FFFFFF"/><rect x="15" y="13" width="1" height="1" fill="#000000"/><rect x="12" y="14" width="1" height="1" fill="#000000"/><rect x="13" y="14" width="2" height="1" fill="#FFFFFF"/><rect x="15" y="14" width="1" height="1" fill="#000000"/><rect x="13" y="15" width="2" height="1" fill="#000000"/></svg>
<div style="left:17px;top:120px;width:4px;height:1px;background:repeating-linear-gradient(to right,#808080 0 1px,transparent 1px 2px);"></div>
<div style="left:7px;top:116px;width:9px;height:9px;background:#fff;"></div>
<div style="left:7px;top:116px;width:9px;height:1px;background:#808080;"></div>
<div style="left:7px;top:124px;width:9px;height:1px;background:#808080;"></div>
<div style="left:7px;top:116px;width:1px;height:9px;background:#808080;"></div>
<div style="left:15px;top:116px;width:1px;height:9px;background:#808080;"></div>
<div style="left:9px;top:120px;width:5px;height:1px;background:#000;"></div>
<span style="left:42.70px;top:115px;transform:scaleX(0.9936);transform-origin:0 0;color:#000;">Storage</span>
<svg style="left:22px;top:113px" width="16" height="14" shape-rendering="crispEdges"><rect x="2" y="0" width="2" height="1" fill="#00A040"/><rect x="4" y="0" width="2" height="1" fill="#FFFF00"/><rect x="1" y="1" width="3" height="1" fill="#00A040"/><rect x="4" y="1" width="3" height="1" fill="#FFFF00"/><rect x="0" y="2" width="4" height="1" fill="#00A040"/><rect x="4" y="2" width="4" height="1" fill="#FFFF00"/><rect x="0" y="3" width="4" height="1" fill="#00A040"/><rect x="4" y="3" width="1" height="1" fill="#FFFF00"/><rect x="5" y="3" width="1" height="1" fill="#000000"/><rect x="6" y="3" width="2" height="1" fill="#FFFF00"/><rect x="8" y="3" width="7" height="1" fill="#000000"/><rect x="0" y="4" width="3" height="1" fill="#00A040"/><rect x="3" y="4" width="1" height="1" fill="#000000"/><rect x="4" y="4" width="1" height="1" fill="#FFFFFF"/><rect x="5" y="4" width="1" height="1" fill="#000000"/><rect x="6" y="4" width="2" height="1" fill="#FFFF00"/><rect x="8" y="4" width="6" height="1" fill="#FFFFFF"/><rect x="14" y="4" width="1" height="1" fill="#000000"/><rect x="0" y="5" width="1" height="1" fill="#808080"/><rect x="1" y="5" width="3" height="1" fill="#00A040"/><rect x="4" y="5" width="1" height="1" fill="#000000"/><rect x="5" y="5" width="1" height="1" fill="#FFFF00"/><rect x="6" y="5" width="8" height="1" fill="#808080"/><rect x="14" y="5" width="1" height="1" fill="#000000"/><rect x="0" y="6" width="1" height="1" fill="#808080"/><rect x="1" y="6" width="1" height="1" fill="#FFFFFF"/><rect x="2" y="6" width="2" height="1" fill="#00A040"/><rect x="4" y="6" width="4" height="1" fill="#808080"/><rect x="8" y="6" width="1" height="1" fill="#000000"/><rect x="9" y="6" width="5" height="1" fill="#808080"/><rect x="14" y="6" width="1" height="1" fill="#000000"/><rect x="0" y="7" width="1" height="1" fill="#808080"/><rect x="1" y="7" width="2" height="1" fill="#FFFFFF"/><rect x="3" y="7" width="4" height="1" fill="#808080"/><rect x="7" y="7" width="2" height="1" fill="#000000"/><rect x="9" y="7" width="5" height="1" fill="#808080"/><rect x="14" y="7" width="1" height="1" fill="#000000"/><rect x="0" y="8" width="1" height="1" fill="#808080"/><rect x="1" y="8" width="6" height="1" fill="#FFFFFF"/><rect x="7" y="8" width="6" height="1" fill="#808080"/><rect x="13" y="8" width="1" height="1" fill="#000000"/><rect x="0" y="9" width="13" height="1" fill="#808080"/><rect x="13" y="9" width="1" height="1" fill="#000000"/><rect x="0" y="10" width="1" height="1" fill="#808080"/><rect x="1" y="10" width="12" height="1" fill="#FFFFFF"/><rect x="13" y="10" width="1" height="1" fill="#000000"/><rect x="0" y="11" width="1" height="1" fill="#808080"/><rect x="1" y="11" width="11" height="1" fill="#C0C0C0"/><rect x="12" y="11" width="1" height="1" fill="#808080"/><rect x="13" y="11" width="1" height="1" fill="#000000"/><rect x="0" y="12" width="1" height="1" fill="#808080"/><rect x="1" y="12" width="11" height="1" fill="#C0C0C0"/><rect x="12" y="12" width="1" height="1" fill="#808080"/><rect x="13" y="12" width="1" height="1" fill="#000000"/><rect x="1" y="13" width="13" height="1" fill="#000000"/></svg>
<div style="left:36px;top:136px;width:4px;height:1px;background:repeating-linear-gradient(to right,#808080 0 1px,transparent 1px 2px);"></div>
<div style="left:26px;top:132px;width:9px;height:9px;background:#fff;"></div>
<div style="left:26px;top:132px;width:9px;height:1px;background:#808080;"></div>
<div style="left:26px;top:140px;width:9px;height:1px;background:#808080;"></div>
<div style="left:26px;top:132px;width:1px;height:9px;background:#808080;"></div>
<div style="left:34px;top:132px;width:1px;height:9px;background:#808080;"></div>
<div style="left:28px;top:136px;width:5px;height:1px;background:#000;"></div>
<div style="left:30px;top:134px;width:1px;height:5px;background:#000;"></div>
<span style="left:60.61px;top:131px;transform:scaleX(0.9840);transform-origin:0 0;color:#000;">Removable Storage</span>
<svg style="left:41px;top:129px" width="16" height="14" shape-rendering="crispEdges"><rect x="6" y="1" width="1" height="1" fill="#A8C8F0"/><rect x="7" y="1" width="2" height="1" fill="#FFFF00"/><rect x="9" y="1" width="2" height="1" fill="#A8C8F0"/><rect x="3" y="2" width="3" height="1" fill="#00A040"/><rect x="6" y="2" width="2" height="1" fill="#FFFF00"/><rect x="8" y="2" width="1" height="1" fill="#A8C8F0"/><rect x="9" y="2" width="2" height="1" fill="#FFFFFF"/><rect x="11" y="2" width="1" height="1" fill="#000000"/><rect x="2" y="3" width="5" height="1" fill="#00A040"/><rect x="7" y="3" width="1" height="1" fill="#FFFF00"/><rect x="8" y="3" width="1" height="1" fill="#A8C8F0"/><rect x="9" y="3" width="3" height="1" fill="#FFFFFF"/><rect x="12" y="3" width="1" height="1" fill="#000000"/><rect x="1" y="4" width="5" height="1" fill="#00A040"/><rect x="6" y="4" width="2" height="1" fill="#FFFF00"/><rect x="8" y="4" width="2" height="1" fill="#A8C8F0"/><rect x="10" y="4" width="3" height="1" fill="#FFFFFF"/><rect x="13" y="4" width="1" height="1" fill="#000000"/><rect x="1" y="5" width="3" height="1" fill="#00A040"/><rect x="4" y="5" width="10" height="1" fill="#000000"/><rect x="1" y="6" width="14" height="1" fill="#000000"/><rect x="1" y="7" width="4" height="1" fill="#000000"/><rect x="5" y="7" width="8" height="1" fill="#FFFFFF"/><rect x="13" y="7" width="2" height="1" fill="#000000"/><rect x="1" y="8" width="14" height="1" fill="#000000"/><rect x="1" y="9" width="1" height="1" fill="#000000"/><rect x="2" y="9" width="10" height="1" fill="#FFFFFF"/><rect x="12" y="9" width="1" height="1" fill="#000000"/><rect x="13" y="9" width="1" height="1" fill="#A8A8E8"/><rect x="14" y="9" width="1" height="1" fill="#000000"/><rect x="1" y="10" width="14" height="1" fill="#000000"/><rect x="1" y="11" width="1" height="1" fill="#000000"/><rect x="2" y="11" width="1" height="1" fill="#FFFFFF"/><rect x="3" y="11" width="2" height="1" fill="#000000"/><rect x="5" y="11" width="4" height="1" fill="#A8A8E8"/><rect x="9" y="11" width="6" height="1" fill="#000000"/><rect x="1" y="12" width="14" height="1" fill="#000000"/><rect x="2" y="13" width="12" height="1" fill="#000000"/></svg>
<div style="left:31px;top:152px;width:9px;height:1px;background:repeating-linear-gradient(to right,#808080 0 1px,transparent 1px 2px);"></div>
<span style="left:60.62px;top:147px;transform:scaleX(0.9756);transform-origin:0 0;color:#000;">Disk Defragmenter</span>
<svg style="left:41px;top:145px" width="16" height="13" shape-rendering="crispEdges"><rect x="10" y="1" width="1" height="1" fill="#C000C0"/><rect x="1" y="2" width="4" height="1" fill="#C00000"/><rect x="6" y="2" width="1" height="1" fill="#FFFF00"/><rect x="11" y="2" width="2" height="1" fill="#C000C0"/><rect x="1" y="3" width="3" height="1" fill="#C00000"/><rect x="4" y="3" width="4" height="1" fill="#FFFF00"/><rect x="12" y="3" width="2" height="1" fill="#C000C0"/><rect x="1" y="4" width="2" height="1" fill="#C00000"/><rect x="3" y="4" width="5" height="1" fill="#FFFF00"/><rect x="8" y="4" width="1" height="1" fill="#000000"/><rect x="1" y="5" width="2" height="1" fill="#C00000"/><rect x="3" y="5" width="3" height="1" fill="#00A040"/><rect x="6" y="5" width="2" height="1" fill="#FFFF00"/><rect x="8" y="5" width="1" height="1" fill="#000000"/><rect x="11" y="5" width="2" height="1" fill="#00A040"/><rect x="1" y="6" width="1" height="1" fill="#C00000"/><rect x="2" y="6" width="5" height="1" fill="#00A040"/><rect x="7" y="6" width="1" height="1" fill="#000000"/><rect x="8" y="6" width="2" height="1" fill="#C000C0"/><rect x="12" y="6" width="2" height="1" fill="#00A040"/><rect x="1" y="7" width="2" height="1" fill="#C00000"/><rect x="3" y="7" width="3" height="1" fill="#00A040"/><rect x="6" y="7" width="4" height="1" fill="#C000C0"/><rect x="13" y="7" width="1" height="1" fill="#00A040"/><rect x="1" y="8" width="2" height="1" fill="#C00000"/><rect x="3" y="8" width="2" height="1" fill="#0000FF"/><rect x="5" y="8" width="1" height="1" fill="#00A040"/><rect x="6" y="8" width="4" height="1" fill="#C000C0"/><rect x="13" y="8" width="2" height="1" fill="#33DDDD"/><rect x="1" y="9" width="1" height="1" fill="#C00000"/><rect x="2" y="9" width="3" height="1" fill="#0000FF"/><rect x="5" y="9" width="1" height="1" fill="#33DDDD"/><rect x="6" y="9" width="4" height="1" fill="#C000C0"/><rect x="10" y="9" width="1" height="1" fill="#C00000"/><rect x="13" y="9" width="2" height="1" fill="#33DDDD"/><rect x="1" y="10" width="2" height="1" fill="#C00000"/><rect x="3" y="10" width="2" height="1" fill="#0000FF"/><rect x="5" y="10" width="2" height="1" fill="#33DDDD"/><rect x="7" y="10" width="3" height="1" fill="#C000C0"/><rect x="10" y="10" width="1" height="1" fill="#000000"/><rect x="1" y="11" width="2" height="1" fill="#C00000"/><rect x="3" y="11" width="2" height="1" fill="#000000"/><rect x="5" y="11" width="2" height="1" fill="#33DDDD"/><rect x="7" y="11" width="4" height="1" fill="#000000"/><rect x="2" y="12" width="7" height="1" fill="#000000"/></svg>
<div style="left:31px;top:168px;width:9px;height:1px;background:repeating-linear-gradient(to right,#808080 0 1px,transparent 1px 2px);"></div>
<span style="left:60.64px;top:163px;transform:scaleX(0.9593);transform-origin:0 0;color:#000;">Disk Management</span>
<svg style="left:41px;top:160px" width="16" height="15" shape-rendering="crispEdges"><rect x="9" y="0" width="1" height="1" fill="#C00000"/><rect x="1" y="1" width="2" height="1" fill="#000000"/><rect x="6" y="1" width="2" height="1" fill="#000000"/><rect x="10" y="1" width="2" height="1" fill="#000000"/><rect x="14" y="1" width="1" height="1" fill="#000000"/><rect x="0" y="2" width="1" height="1" fill="#000000"/><rect x="3" y="2" width="1" height="1" fill="#000000"/><rect x="5" y="2" width="1" height="1" fill="#000000"/><rect x="8" y="2" width="1" height="1" fill="#000000"/><rect x="10" y="2" width="1" height="1" fill="#000000"/><rect x="13" y="2" width="2" height="1" fill="#000000"/><rect x="3" y="3" width="1" height="1" fill="#000080"/><rect x="4" y="3" width="1" height="1" fill="#000000"/><rect x="8" y="3" width="1" height="1" fill="#000000"/><rect x="10" y="3" width="1" height="1" fill="#000000"/><rect x="13" y="3" width="1" height="1" fill="#000000"/><rect x="14" y="3" width="1" height="1" fill="#00A040"/><rect x="3" y="4" width="1" height="1" fill="#000080"/><rect x="4" y="4" width="1" height="1" fill="#000000"/><rect x="5" y="4" width="3" height="1" fill="#FFFFFF"/><rect x="8" y="4" width="1" height="1" fill="#000000"/><rect x="10" y="4" width="1" height="1" fill="#000000"/><rect x="13" y="4" width="1" height="1" fill="#000000"/><rect x="14" y="4" width="1" height="1" fill="#00A040"/><rect x="2" y="5" width="13" height="1" fill="#000000"/><rect x="1" y="6" width="13" height="1" fill="#808080"/><rect x="14" y="6" width="2" height="1" fill="#000000"/><rect x="1" y="7" width="1" height="1" fill="#FFFFFF"/><rect x="2" y="7" width="12" height="1" fill="#C0C0C0"/><rect x="14" y="7" width="1" height="1" fill="#000000"/><rect x="15" y="7" width="1" height="1" fill="#FFFFFF"/><rect x="1" y="8" width="1" height="1" fill="#FFFFFF"/><rect x="2" y="8" width="4" height="1" fill="#C0C0C0"/><rect x="6" y="8" width="2" height="1" fill="#000000"/><rect x="8" y="8" width="5" height="1" fill="#FFFFFF"/><rect x="13" y="8" width="1" height="1" fill="#000000"/><rect x="14" y="8" width="1" height="1" fill="#FFFFFF"/><rect x="15" y="8" width="1" height="1" fill="#000000"/><rect x="1" y="9" width="5" height="1" fill="#000000"/><rect x="6" y="9" width="1" height="1" fill="#FFFFFF"/><rect x="7" y="9" width="2" height="1" fill="#FFFF00"/><rect x="9" y="9" width="3" height="1" fill="#FFFFFF"/><rect x="12" y="9" width="1" height="1" fill="#000000"/><rect x="13" y="9" width="1" height="1" fill="#FFFFFF"/><rect x="14" y="9" width="2" height="1" fill="#000000"/><rect x="1" y="10" width="1" height="1" fill="#000000"/><rect x="2" y="10" width="3" height="1" fill="#FFFFFF"/><rect x="5" y="10" width="1" height="1" fill="#000000"/><rect x="6" y="10" width="1" height="1" fill="#FFFFFF"/><rect x="7" y="10" width="1" height="1" fill="#FFFF00"/><rect x="8" y="10" width="5" height="1" fill="#FFFFFF"/><rect x="13" y="10" width="1" height="1" fill="#000000"/><rect x="14" y="10" width="1" height="1" fill="#FFFFFF"/><rect x="15" y="10" width="1" height="1" fill="#000000"/><rect x="1" y="11" width="2" height="1" fill="#000000"/><rect x="3" y="11" width="4" height="1" fill="#FFFFFF"/><rect x="7" y="11" width="2" height="1" fill="#FFFF00"/><rect x="9" y="11" width="5" height="1" fill="#000000"/><rect x="14" y="11" width="1" height="1" fill="#FFFFFF"/><rect x="15" y="11" width="1" height="1" fill="#000000"/><rect x="2" y="12" width="5" height="1" fill="#000000"/><rect x="7" y="12" width="1" height="1" fill="#FFFF00"/><rect x="8" y="12" width="6" height="1" fill="#000000"/><rect x="6" y="13" width="1" height="1" fill="#000000"/><rect x="7" y="13" width="1" height="1" fill="#FFFF00"/><rect x="8" y="13" width="2" height="1" fill="#000000"/><rect x="7" y="14" width="2" height="1" fill="#000000"/></svg>
<div style="left:17px;top:184px;width:4px;height:1px;background:repeating-linear-gradient(to right,#808080 0 1px,transparent 1px 2px);"></div>
<div style="left:7px;top:180px;width:9px;height:9px;background:#fff;"></div>
<div style="left:7px;top:180px;width:9px;height:1px;background:#808080;"></div>
<div style="left:7px;top:188px;width:9px;height:1px;background:#808080;"></div>
<div style="left:7px;top:180px;width:1px;height:9px;background:#808080;"></div>
<div style="left:15px;top:180px;width:1px;height:9px;background:#808080;"></div>
<div style="left:9px;top:184px;width:5px;height:1px;background:#000;"></div>
<div style="left:11px;top:182px;width:1px;height:5px;background:#000;"></div>
<span style="left:42.72px;top:179px;transform:scaleX(0.9658);transform-origin:0 0;color:#000;">Services and Applications</span>
<svg style="left:22px;top:176px" width="16" height="16" shape-rendering="crispEdges"><rect x="1" y="0" width="9" height="1" fill="#808080"/><rect x="0" y="1" width="1" height="1" fill="#808080"/><rect x="1" y="1" width="8" height="1" fill="#FFFFFF"/><rect x="9" y="1" width="1" height="1" fill="#808080"/><rect x="10" y="1" width="1" height="1" fill="#000000"/><rect x="0" y="2" width="1" height="1" fill="#808080"/><rect x="1" y="2" width="8" height="1" fill="#FFFFFF"/><rect x="9" y="2" width="1" height="1" fill="#808080"/><rect x="10" y="2" width="1" height="1" fill="#000000"/><rect x="0" y="3" width="10" height="1" fill="#808080"/><rect x="10" y="3" width="1" height="1" fill="#000000"/><rect x="0" y="4" width="1" height="1" fill="#808080"/><rect x="1" y="4" width="6" height="1" fill="#FFFFFF"/><rect x="7" y="4" width="1" height="1" fill="#E8E070"/><rect x="8" y="4" width="1" height="1" fill="#000000"/><rect x="9" y="4" width="1" height="1" fill="#808080"/><rect x="10" y="4" width="1" height="1" fill="#000000"/><rect x="13" y="4" width="1" height="1" fill="#000000"/><rect x="0" y="5" width="1" height="1" fill="#808080"/><rect x="1" y="5" width="5" height="1" fill="#FFFFFF"/><rect x="6" y="5" width="1" height="1" fill="#000000"/><rect x="7" y="5" width="2" height="1" fill="#E8E070"/><rect x="9" y="5" width="2" height="1" fill="#000000"/><rect x="12" y="5" width="1" height="1" fill="#000000"/><rect x="13" y="5" width="1" height="1" fill="#E8E070"/><rect x="14" y="5" width="1" height="1" fill="#000000"/><rect x="0" y="6" width="5" height="1" fill="#808080"/><rect x="5" y="6" width="1" height="1" fill="#000000"/><rect x="6" y="6" width="4" height="1" fill="#E8E070"/><rect x="10" y="6" width="2" height="1" fill="#000000"/><rect x="12" y="6" width="2" height="1" fill="#E8E070"/><rect x="14" y="6" width="1" height="1" fill="#000000"/><rect x="0" y="7" width="1" height="1" fill="#808080"/><rect x="1" y="7" width="4" height="1" fill="#C0C0C0"/><rect x="5" y="7" width="1" height="1" fill="#000000"/><rect x="6" y="7" width="2" height="1" fill="#E8E070"/><rect x="8" y="7" width="1" height="1" fill="#000000"/><rect x="9" y="7" width="5" height="1" fill="#E8E070"/><rect x="14" y="7" width="1" height="1" fill="#000000"/><rect x="0" y="8" width="1" height="1" fill="#808080"/><rect x="1" y="8" width="2" height="1" fill="#C0C0C0"/><rect x="3" y="8" width="1" height="1" fill="#000000"/><rect x="4" y="8" width="3" height="1" fill="#E8E070"/><rect x="7" y="8" width="3" height="1" fill="#000000"/><rect x="10" y="8" width="3" height="1" fill="#E8E070"/><rect x="13" y="8" width="1" height="1" fill="#000000"/><rect x="0" y="9" width="1" height="1" fill="#808080"/><rect x="1" y="9" width="3" height="1" fill="#C0C0C0"/><rect x="4" y="9" width="1" height="1" fill="#000000"/><rect x="5" y="9" width="2" height="1" fill="#E8E070"/><rect x="7" y="9" width="3" height="1" fill="#000000"/><rect x="10" y="9" width="4" height="1" fill="#E8E070"/><rect x="14" y="9" width="1" height="1" fill="#000000"/><rect x="0" y="10" width="1" height="1" fill="#808080"/><rect x="1" y="10" width="2" height="1" fill="#C0C0C0"/><rect x="3" y="10" width="1" height="1" fill="#000000"/><rect x="4" y="10" width="4" height="1" fill="#E8E070"/><rect x="8" y="10" width="1" height="1" fill="#000000"/><rect x="9" y="10" width="4" height="1" fill="#E8E070"/><rect x="13" y="10" width="1" height="1" fill="#000000"/><rect x="0" y="11" width="1" height="1" fill="#808080"/><rect x="1" y="11" width="4" height="1" fill="#C0C0C0"/><rect x="5" y="11" width="1" height="1" fill="#000000"/><rect x="6" y="11" width="1" height="1" fill="#E8E070"/><rect x="7" y="11" width="1" height="1" fill="#000000"/><rect x="8" y="11" width="3" height="1" fill="#E8E070"/><rect x="11" y="11" width="1" height="1" fill="#000000"/><rect x="12" y="11" width="2" height="1" fill="#E8E070"/><rect x="14" y="11" width="1" height="1" fill="#000000"/><rect x="0" y="12" width="1" height="1" fill="#808080"/><rect x="1" y="12" width="3" height="1" fill="#C0C0C0"/><rect x="4" y="12" width="1" height="1" fill="#808080"/><rect x="5" y="12" width="4" height="1" fill="#000000"/><rect x="9" y="12" width="1" height="1" fill="#E8E070"/><rect x="10" y="12" width="4" height="1" fill="#000000"/><rect x="0" y="13" width="1" height="1" fill="#808080"/><rect x="1" y="13" width="4" height="1" fill="#C0C0C0"/><rect x="5" y="13" width="1" height="1" fill="#808080"/><rect x="6" y="13" width="1" height="1" fill="#000000"/><rect x="9" y="13" width="1" height="1" fill="#000000"/><rect x="0" y="14" width="1" height="1" fill="#808080"/><rect x="1" y="14" width="6" height="1" fill="#C0C0C0"/><rect x="7" y="14" width="1" height="1" fill="#808080"/><rect x="1" y="15" width="7" height="1" fill="#000000"/></svg>
</div>
<div style="left:6px;top:557px;width:16px;height:16px;background:#D4D0C8;"></div>
<div style="left:6px;top:557px;width:16px;height:1px;background:#FFFFFF;"></div>
<div style="left:6px;top:557px;width:1px;height:16px;background:#FFFFFF;"></div>
<div style="left:6px;top:572px;width:16px;height:1px;background:#404040;"></div>
<div style="left:21px;top:557px;width:1px;height:16px;background:#404040;"></div>
<div style="left:7px;top:571px;width:14px;height:1px;background:#808080;"></div>
<div style="left:20px;top:558px;width:1px;height:14px;background:#808080;"></div>
<div style="left:22px;top:557px;width:157px;height:16px;background:#D4D0C8;"></div>
<div style="left:22px;top:557px;width:157px;height:1px;background:#FFFFFF;"></div>
<div style="left:22px;top:557px;width:1px;height:16px;background:#FFFFFF;"></div>
<div style="left:22px;top:572px;width:157px;height:1px;background:#404040;"></div>
<div style="left:178px;top:557px;width:1px;height:16px;background:#404040;"></div>
<div style="left:23px;top:571px;width:155px;height:1px;background:#808080;"></div>
<div style="left:177px;top:558px;width:1px;height:14px;background:#808080;"></div>
<div style="left:179px;top:557px;width:8px;height:16px;background:repeating-conic-gradient(#fff 0 25%,#D4D0C8 0 50%) 0 0/2px 2px;"></div>
<div style="left:187px;top:557px;width:15px;height:16px;background:#D4D0C8;"></div>
<div style="left:187px;top:557px;width:15px;height:1px;background:#FFFFFF;"></div>
<div style="left:187px;top:557px;width:1px;height:16px;background:#FFFFFF;"></div>
<div style="left:187px;top:572px;width:15px;height:1px;background:#404040;"></div>
<div style="left:201px;top:557px;width:1px;height:16px;background:#404040;"></div>
<div style="left:188px;top:571px;width:13px;height:1px;background:#808080;"></div>
<div style="left:200px;top:558px;width:1px;height:14px;background:#808080;"></div>
<div style="left:11px;top:564px;width:1px;height:1px;background:#000;"></div>
<div style="left:12px;top:563px;width:1px;height:3px;background:#000;"></div>
<div style="left:13px;top:562px;width:1px;height:5px;background:#000;"></div>
<div style="left:14px;top:561px;width:1px;height:7px;background:#000;"></div>
<div style="left:192px;top:561px;width:1px;height:7px;background:#000;"></div>
<div style="left:193px;top:562px;width:1px;height:5px;background:#000;"></div>
<div style="left:194px;top:563px;width:1px;height:3px;background:#000;"></div>
<div style="left:195px;top:564px;width:1px;height:1px;background:#000;"></div>
<div style="left:207px;top:76px;width:570px;height:178px;background:#FFFFFF;"></div>
<div style="left:207px;top:76px;width:570px;height:1px;background:#808080;"></div>
<div style="left:207px;top:76px;width:1px;height:178px;background:#808080;"></div>
<div style="left:207px;top:253px;width:570px;height:1px;background:#FFFFFF;"></div>
<div style="left:776px;top:76px;width:1px;height:178px;background:#FFFFFF;"></div>
<div style="left:208px;top:77px;width:568px;height:1px;background:#404040;"></div>
<div style="left:208px;top:77px;width:1px;height:176px;background:#404040;"></div>
<div style="left:208px;top:252px;width:568px;height:1px;background:#D4D0C8;"></div>
<div style="left:775px;top:77px;width:1px;height:176px;background:#D4D0C8;"></div>
<div style="left:209px;top:78px;width:566px;height:158px;overflow:hidden">
<div style="left:0px;top:0px;width:46px;height:17px;background:#D4D0C8;"></div>
<div style="left:0px;top:0px;width:46px;height:1px;background:#FFFFFF;"></div>
<div style="left:0px;top:0px;width:1px;height:17px;background:#FFFFFF;"></div>
<div style="left:0px;top:16px;width:46px;height:1px;background:#404040;"></div>
<div style="left:45px;top:0px;width:1px;height:17px;background:#404040;"></div>
<div style="left:1px;top:15px;width:44px;height:1px;background:#808080;"></div>
<div style="left:44px;top:1px;width:1px;height:15px;background:#808080;"></div>
<span style="left:6.15px;top:4px;transform:scaleX(0.9018);transform-origin:0 0;color:#000;">Volume</span>
<div style="left:46px;top:0px;width:52px;height:17px;background:#D4D0C8;"></div>
<div style="left:46px;top:0px;width:52px;height:1px;background:#FFFFFF;"></div>
<div style="left:46px;top:0px;width:1px;height:17px;background:#FFFFFF;"></div>
<div style="left:46px;top:16px;width:52px;height:1px;background:#404040;"></div>
<div style="left:97px;top:0px;width:1px;height:17px;background:#404040;"></div>
<div style="left:47px;top:15px;width:50px;height:1px;background:#808080;"></div>
<div style="left:96px;top:1px;width:1px;height:15px;background:#808080;"></div>
<span style="left:51.09px;top:4px;transform:scaleX(1.0140);transform-origin:0 0;color:#000;">Layout</span>
<div style="left:98px;top:0px;width:36px;height:17px;background:#D4D0C8;"></div>
<div style="left:98px;top:0px;width:36px;height:1px;background:#FFFFFF;"></div>
<div style="left:98px;top:0px;width:1px;height:17px;background:#FFFFFF;"></div>
<div style="left:98px;top:16px;width:36px;height:1px;background:#404040;"></div>
<div style="left:133px;top:0px;width:1px;height:17px;background:#404040;"></div>
<div style="left:99px;top:15px;width:34px;height:1px;background:#808080;"></div>
<div style="left:132px;top:1px;width:1px;height:15px;background:#808080;"></div>
<span style="left:104.27px;top:4px;transform:scaleX(0.9217);transform-origin:0 0;color:#000;">Type</span>
<div style="left:134px;top:0px;width:65px;height:17px;background:#D4D0C8;"></div>
<div style="left:134px;top:0px;width:65px;height:1px;background:#FFFFFF;"></div>
<div style="left:134px;top:0px;width:1px;height:17px;background:#FFFFFF;"></div>
<div style="left:134px;top:16px;width:65px;height:1px;background:#404040;"></div>
<div style="left:198px;top:0px;width:1px;height:17px;background:#404040;"></div>
<div style="left:135px;top:15px;width:63px;height:1px;background:#808080;"></div>
<div style="left:197px;top:1px;width:1px;height:15px;background:#808080;"></div>
<span style="left:139.04px;top:4px;transform:scaleX(0.9547);transform-origin:0 0;color:#000;">File System</span>
<div style="left:199px;top:0px;width:95px;height:17px;background:#D4D0C8;"></div>
<div style="left:199px;top:0px;width:95px;height:1px;background:#FFFFFF;"></div>
<div style="left:199px;top:0px;width:1px;height:17px;background:#FFFFFF;"></div>
<div style="left:199px;top:16px;width:95px;height:1px;background:#404040;"></div>
<div style="left:293px;top:0px;width:1px;height:17px;background:#404040;"></div>
<div style="left:200px;top:15px;width:93px;height:1px;background:#808080;"></div>
<div style="left:292px;top:1px;width:1px;height:15px;background:#808080;"></div>
<span style="left:205.49px;top:4px;transform:scaleX(1.0139);transform-origin:0 0;color:#000;">Status</span>
<div style="left:294px;top:0px;width:54px;height:17px;background:#D4D0C8;"></div>
<div style="left:294px;top:0px;width:54px;height:1px;background:#FFFFFF;"></div>
<div style="left:294px;top:0px;width:1px;height:17px;background:#FFFFFF;"></div>
<div style="left:294px;top:16px;width:54px;height:1px;background:#404040;"></div>
<div style="left:347px;top:0px;width:1px;height:17px;background:#404040;"></div>
<div style="left:295px;top:15px;width:52px;height:1px;background:#808080;"></div>
<div style="left:346px;top:1px;width:1px;height:15px;background:#808080;"></div>
<span style="left:300.66px;top:4px;transform:scaleX(0.9711);transform-origin:0 0;color:#000;">Capacity</span>
<div style="left:348px;top:0px;width:66px;height:17px;background:#D4D0C8;"></div>
<div style="left:348px;top:0px;width:66px;height:1px;background:#FFFFFF;"></div>
<div style="left:348px;top:0px;width:1px;height:17px;background:#FFFFFF;"></div>
<div style="left:348px;top:16px;width:66px;height:1px;background:#404040;"></div>
<div style="left:413px;top:0px;width:1px;height:17px;background:#404040;"></div>
<div style="left:349px;top:15px;width:64px;height:1px;background:#808080;"></div>
<div style="left:412px;top:1px;width:1px;height:15px;background:#808080;"></div>
<span style="left:354.14px;top:4px;transform:scaleX(0.9553);transform-origin:0 0;color:#000;">Free Space</span>
<div style="left:414px;top:0px;width:51px;height:17px;background:#D4D0C8;"></div>
<div style="left:414px;top:0px;width:51px;height:1px;background:#FFFFFF;"></div>
<div style="left:414px;top:0px;width:1px;height:17px;background:#FFFFFF;"></div>
<div style="left:414px;top:16px;width:51px;height:1px;background:#404040;"></div>
<div style="left:464px;top:0px;width:1px;height:17px;background:#404040;"></div>
<div style="left:415px;top:15px;width:49px;height:1px;background:#808080;"></div>
<div style="left:463px;top:1px;width:1px;height:15px;background:#808080;"></div>
<span style="left:420.41px;top:4px;color:#000;">% Free</span>
<div style="left:465px;top:0px;width:86px;height:17px;background:#D4D0C8;"></div>
<div style="left:465px;top:0px;width:86px;height:1px;background:#FFFFFF;"></div>
<div style="left:465px;top:0px;width:1px;height:17px;background:#FFFFFF;"></div>
<div style="left:465px;top:16px;width:86px;height:1px;background:#404040;"></div>
<div style="left:550px;top:0px;width:1px;height:17px;background:#404040;"></div>
<div style="left:466px;top:15px;width:84px;height:1px;background:#808080;"></div>
<div style="left:549px;top:1px;width:1px;height:15px;background:#808080;"></div>
<span style="left:471.30px;top:4px;transform:scaleX(0.9957);transform-origin:0 0;color:#000;">Fault Tolerance</span>
<div style="left:551px;top:0px;width:40px;height:17px;background:#D4D0C8;"></div>
<div style="left:551px;top:0px;width:40px;height:1px;background:#FFFFFF;"></div>
<div style="left:551px;top:0px;width:1px;height:17px;background:#FFFFFF;"></div>
<div style="left:551px;top:16px;width:40px;height:1px;background:#404040;"></div>
<div style="left:590px;top:0px;width:1px;height:17px;background:#404040;"></div>
<div style="left:552px;top:15px;width:38px;height:1px;background:#808080;"></div>
<div style="left:589px;top:1px;width:1px;height:15px;background:#808080;"></div>
<span style="left:557.98px;top:4px;color:#000;">O</span>
<svg style="left:2px;top:20px" width="16" height="8" shape-rendering="crispEdges"><rect x="2" y="0" width="12" height="1" fill="#808080"/><rect x="1" y="1" width="1" height="1" fill="#808080"/><rect x="2" y="1" width="12" height="1" fill="#FFFFFF"/><rect x="14" y="1" width="1" height="1" fill="#808080"/><rect x="15" y="1" width="1" height="1" fill="#000000"/><rect x="0" y="2" width="1" height="1" fill="#808080"/><rect x="1" y="2" width="1" height="1" fill="#FFFFFF"/><rect x="2" y="2" width="11" height="1" fill="#C0C0C0"/><rect x="13" y="2" width="1" height="1" fill="#FFFFFF"/><rect x="14" y="2" width="1" height="1" fill="#808080"/><rect x="15" y="2" width="1" height="1" fill="#000000"/><rect x="0" y="3" width="1" height="1" fill="#808080"/><rect x="1" y="3" width="12" height="1" fill="#FFFFFF"/><rect x="13" y="3" width="1" height="1" fill="#C0C0C0"/><rect x="14" y="3" width="1" height="1" fill="#808080"/><rect x="15" y="3" width="1" height="1" fill="#000000"/><rect x="0" y="4" width="1" height="1" fill="#808080"/><rect x="1" y="4" width="1" height="1" fill="#C0C0C0"/><rect x="2" y="4" width="10" height="1" fill="#808080"/><rect x="12" y="4" width="2" height="1" fill="#C0C0C0"/><rect x="14" y="4" width="1" height="1" fill="#808080"/><rect x="15" y="4" width="1" height="1" fill="#000000"/><rect x="0" y="5" width="1" height="1" fill="#808080"/><rect x="1" y="5" width="13" height="1" fill="#C0C0C0"/><rect x="14" y="5" width="1" height="1" fill="#808080"/><rect x="15" y="5" width="1" height="1" fill="#000000"/><rect x="1" y="6" width="1" height="1" fill="#808080"/><rect x="2" y="6" width="12" height="1" fill="#C0C0C0"/><rect x="14" y="6" width="2" height="1" fill="#000000"/><rect x="2" y="7" width="13" height="1" fill="#000000"/></svg>
<svg style="left:2px;top:37px" width="16" height="8" shape-rendering="crispEdges"><rect x="2" y="0" width="12" height="1" fill="#808080"/><rect x="1" y="1" width="1" height="1" fill="#808080"/><rect x="2" y="1" width="12" height="1" fill="#FFFFFF"/><rect x="14" y="1" width="1" height="1" fill="#808080"/><rect x="15" y="1" width="1" height="1" fill="#000000"/><rect x="0" y="2" width="1" height="1" fill="#808080"/><rect x="1" y="2" width="1" height="1" fill="#FFFFFF"/><rect x="2" y="2" width="11" height="1" fill="#C0C0C0"/><rect x="13" y="2" width="1" height="1" fill="#FFFFFF"/><rect x="14" y="2" width="1" height="1" fill="#808080"/><rect x="15" y="2" width="1" height="1" fill="#000000"/><rect x="0" y="3" width="1" height="1" fill="#808080"/><rect x="1" y="3" width="12" height="1" fill="#FFFFFF"/><rect x="13" y="3" width="1" height="1" fill="#C0C0C0"/><rect x="14" y="3" width="1" height="1" fill="#808080"/><rect x="15" y="3" width="1" height="1" fill="#000000"/><rect x="0" y="4" width="1" height="1" fill="#808080"/><rect x="1" y="4" width="1" height="1" fill="#C0C0C0"/><rect x="2" y="4" width="10" height="1" fill="#808080"/><rect x="12" y="4" width="2" height="1" fill="#C0C0C0"/><rect x="14" y="4" width="1" height="1" fill="#808080"/><rect x="15" y="4" width="1" height="1" fill="#000000"/><rect x="0" y="5" width="1" height="1" fill="#808080"/><rect x="1" y="5" width="13" height="1" fill="#C0C0C0"/><rect x="14" y="5" width="1" height="1" fill="#808080"/><rect x="15" y="5" width="1" height="1" fill="#000000"/><rect x="1" y="6" width="1" height="1" fill="#808080"/><rect x="2" y="6" width="12" height="1" fill="#C0C0C0"/><rect x="14" y="6" width="2" height="1" fill="#000000"/><rect x="2" y="7" width="13" height="1" fill="#000000"/></svg>
<span style="left:22.24px;top:21px;transform:scaleX(1.1144);transform-origin:0 0;color:#000;">(C:)</span>
<span style="left:51.09px;top:21px;transform:scaleX(1.0119);transform-origin:0 0;color:#000;">Partition</span>
<span style="left:103.69px;top:21px;transform:scaleX(0.8946);transform-origin:0 0;color:#000;">Basic</span>
<span style="left:139.10px;top:21px;transform:scaleX(0.8898);transform-origin:0 0;color:#000;">NTFS</span>
<span style="left:205.10px;top:21px;transform:scaleX(0.9967);transform-origin:0 0;color:#000;">Healthy (System)</span>
<span style="left:300.66px;top:21px;transform:scaleX(0.9612);transform-origin:0 0;color:#000;">7.99 GB</span>
<span style="left:354.47px;top:21px;transform:scaleX(0.9610);transform-origin:0 0;color:#000;">2.43 GB</span>
<span style="left:420.36px;top:21px;transform:scaleX(1.0552);transform-origin:0 0;color:#000;">30 %</span>
<span style="left:471.09px;top:21px;transform:scaleX(1.0079);transform-origin:0 0;color:#000;">No</span>
<span style="left:557.67px;top:21px;color:#000;">0%</span>
<span style="left:19.29px;top:38px;transform:scaleX(1.1260);transform-origin:0 0;color:#000;">M...</span>
<span style="left:51.09px;top:38px;transform:scaleX(1.0119);transform-origin:0 0;color:#000;">Partition</span>
<span style="left:103.69px;top:38px;transform:scaleX(0.8946);transform-origin:0 0;color:#000;">Basic</span>
<span style="left:139.10px;top:38px;transform:scaleX(0.8898);transform-origin:0 0;color:#000;">NTFS</span>
<span style="left:205.11px;top:38px;transform:scaleX(0.9868);transform-origin:0 0;color:#000;">Healthy</span>
<span style="left:300.74px;top:38px;transform:scaleX(1.1058);transform-origin:0 0;color:#000;">32.00...</span>
<span style="left:355.10px;top:38px;transform:scaleX(0.9455);transform-origin:0 0;color:#000;">31.93 GB</span>
<span style="left:420.26px;top:38px;transform:scaleX(1.0592);transform-origin:0 0;color:#000;">99 %</span>
<span style="left:471.09px;top:38px;transform:scaleX(1.0079);transform-origin:0 0;color:#000;">No</span>
<span style="left:557.67px;top:38px;color:#000;">0%</span>
</div>
<div style="left:209px;top:236px;width:16px;height:16px;background:#D4D0C8;"></div>
<div style="left:209px;top:236px;width:16px;height:1px;background:#FFFFFF;"></div>
<div style="left:209px;top:236px;width:1px;height:16px;background:#FFFFFF;"></div>
<div style="left:209px;top:251px;width:16px;height:1px;background:#404040;"></div>
<div style="left:224px;top:236px;width:1px;height:16px;background:#404040;"></div>
<div style="left:210px;top:250px;width:14px;height:1px;background:#808080;"></div>
<div style="left:223px;top:237px;width:1px;height:14px;background:#808080;"></div>
<div style="left:225px;top:236px;width:494px;height:16px;background:#D4D0C8;"></div>
<div style="left:225px;top:236px;width:494px;height:1px;background:#FFFFFF;"></div>
<div style="left:225px;top:236px;width:1px;height:16px;background:#FFFFFF;"></div>
<div style="left:225px;top:251px;width:494px;height:1px;background:#404040;"></div>
<div style="left:718px;top:236px;width:1px;height:16px;background:#404040;"></div>
<div style="left:226px;top:250px;width:492px;height:1px;background:#808080;"></div>
<div style="left:717px;top:237px;width:1px;height:14px;background:#808080;"></div>
<div style="left:719px;top:236px;width:40px;height:16px;background:repeating-conic-gradient(#fff 0 25%,#D4D0C8 0 50%) 0 0/2px 2px;"></div>
<div style="left:759px;top:236px;width:16px;height:16px;background:#D4D0C8;"></div>
<div style="left:759px;top:236px;width:16px;height:1px;background:#FFFFFF;"></div>
<div style="left:759px;top:236px;width:1px;height:16px;background:#FFFFFF;"></div>
<div style="left:759px;top:251px;width:16px;height:1px;background:#404040;"></div>
<div style="left:774px;top:236px;width:1px;height:16px;background:#404040;"></div>
<div style="left:760px;top:250px;width:14px;height:1px;background:#808080;"></div>
<div style="left:773px;top:237px;width:1px;height:14px;background:#808080;"></div>
<div style="left:214px;top:243px;width:1px;height:1px;background:#000;"></div>
<div style="left:215px;top:242px;width:1px;height:3px;background:#000;"></div>
<div style="left:216px;top:241px;width:1px;height:5px;background:#000;"></div>
<div style="left:217px;top:240px;width:1px;height:7px;background:#000;"></div>
<div style="left:765px;top:240px;width:1px;height:7px;background:#000;"></div>
<div style="left:766px;top:241px;width:1px;height:5px;background:#000;"></div>
<div style="left:767px;top:242px;width:1px;height:3px;background:#000;"></div>
<div style="left:768px;top:243px;width:1px;height:1px;background:#000;"></div>
<div style="left:207px;top:258px;width:570px;height:317px;background:#D4D0C8;"></div>
<div style="left:207px;top:258px;width:570px;height:1px;background:#808080;"></div>
<div style="left:207px;top:258px;width:1px;height:317px;background:#808080;"></div>
<div style="left:207px;top:574px;width:570px;height:1px;background:#FFFFFF;"></div>
<div style="left:776px;top:258px;width:1px;height:317px;background:#FFFFFF;"></div>
<div style="left:208px;top:259px;width:568px;height:1px;background:#404040;"></div>
<div style="left:208px;top:259px;width:1px;height:315px;background:#404040;"></div>
<div style="left:208px;top:573px;width:568px;height:1px;background:#D4D0C8;"></div>
<div style="left:775px;top:259px;width:1px;height:315px;background:#D4D0C8;"></div>
<div style="left:209px;top:264px;width:448px;height:1px;background:#FFFFFF;"></div>
<div style="left:209px;top:264px;width:1px;height:71px;background:#FFFFFF;"></div>
<div style="left:209px;top:334px;width:448px;height:1px;background:#808080;"></div>
<div style="left:657px;top:264px;width:1px;height:71px;background:#808080;"></div>
<div style="left:306px;top:264px;width:1px;height:71px;background:#FFFFFF;"></div>
<div style="left:308px;top:265px;width:1px;height:70px;background:#808080;"></div>
<svg style="left:219px;top:271px" width="16" height="11" shape-rendering="crispEdges"><rect x="1" y="0" width="14" height="1" fill="#808080"/><rect x="1" y="1" width="1" height="1" fill="#808080"/><rect x="2" y="1" width="12" height="1" fill="#C0C0C0"/><rect x="14" y="1" width="2" height="1" fill="#000000"/><rect x="1" y="2" width="1" height="1" fill="#808080"/><rect x="2" y="2" width="12" height="1" fill="#C0C0C0"/><rect x="14" y="2" width="2" height="1" fill="#000000"/><rect x="1" y="3" width="1" height="1" fill="#808080"/><rect x="2" y="3" width="5" height="1" fill="#C0C0C0"/><rect x="7" y="3" width="3" height="1" fill="#000000"/><rect x="10" y="3" width="4" height="1" fill="#C0C0C0"/><rect x="14" y="3" width="2" height="1" fill="#000000"/><rect x="1" y="4" width="1" height="1" fill="#808080"/><rect x="2" y="4" width="2" height="1" fill="#C0C0C0"/><rect x="4" y="4" width="4" height="1" fill="#000000"/><rect x="8" y="4" width="1" height="1" fill="#E8E070"/><rect x="9" y="4" width="1" height="1" fill="#FFFFFF"/><rect x="10" y="4" width="3" height="1" fill="#000000"/><rect x="13" y="4" width="1" height="1" fill="#C0C0C0"/><rect x="14" y="4" width="2" height="1" fill="#000000"/><rect x="0" y="5" width="4" height="1" fill="#000000"/><rect x="4" y="5" width="4" height="1" fill="#FFFFFF"/><rect x="8" y="5" width="2" height="1" fill="#E8E070"/><rect x="10" y="5" width="6" height="1" fill="#000000"/><rect x="0" y="6" width="1" height="1" fill="#000000"/><rect x="1" y="6" width="7" height="1" fill="#FFFFFF"/><rect x="8" y="6" width="1" height="1" fill="#E8E070"/><rect x="9" y="6" width="5" height="1" fill="#FFFFFF"/><rect x="14" y="6" width="1" height="1" fill="#000000"/><rect x="1" y="7" width="3" height="1" fill="#000000"/><rect x="4" y="7" width="4" height="1" fill="#FFFFFF"/><rect x="8" y="7" width="1" height="1" fill="#E8E070"/><rect x="9" y="7" width="5" height="1" fill="#000000"/><rect x="2" y="8" width="6" height="1" fill="#000000"/><rect x="8" y="8" width="1" height="1" fill="#E8E070"/><rect x="9" y="8" width="5" height="1" fill="#000000"/><rect x="4" y="9" width="4" height="1" fill="#000000"/><rect x="8" y="9" width="1" height="1" fill="#E8E070"/><rect x="9" y="9" width="1" height="1" fill="#000000"/><rect x="7" y="10" width="3" height="1" fill="#000000"/></svg>
<span style="left:235.72px;top:273px;font-weight:bold;transform:scaleX(1.0663);transform-origin:0 0;color:#000;">Disk 0</span>
<span style="left:217.69px;top:286px;transform:scaleX(0.8985);transform-origin:0 0;color:#000;">Basic</span>
<span style="left:217.97px;top:299px;transform:scaleX(0.9434);transform-origin:0 0;color:#000;">7.99 GB</span>
<span style="left:218.01px;top:312px;transform:scaleX(0.9419);transform-origin:0 0;color:#000;">Online</span>
<div style="left:310px;top:268px;width:343px;height:1px;background:#FFFFFF;"></div>
<div style="left:310px;top:268px;width:1px;height:63px;background:#FFFFFF;"></div>
<div style="left:310px;top:330px;width:344px;height:1px;background:#808080;"></div>
<div style="left:653px;top:268px;width:1px;height:63px;background:#808080;"></div>
<div style="left:311px;top:269px;width:342px;height:11px;background:#000088;"></div>
<div style="left:314px;top:283px;width:336px;height:44px;background:#fff;"></div>
<div style="left:314px;top:283px;width:336px;height:1px;background:#808080;"></div>
<div style="left:314px;top:283px;width:1px;height:44px;background:#808080;"></div>
<span style="left:323.28px;top:288px;font-weight:bold;transform:scaleX(1.1267);transform-origin:0 0;color:#000;">(C:)</span>
<span style="left:317.99px;top:301px;transform:scaleX(0.9174);transform-origin:0 0;color:#000;">7.99 GB NTFS</span>
<span style="left:317.61px;top:314px;transform:scaleX(0.9943);transform-origin:0 0;color:#000;">Healthy (System)</span>
<div style="left:209px;top:335px;width:566px;height:1px;background:#FFFFFF;"></div>
<div style="left:209px;top:335px;width:1px;height:71px;background:#FFFFFF;"></div>
<div style="left:209px;top:405px;width:566px;height:1px;background:#808080;"></div>
<div style="left:306px;top:335px;width:1px;height:71px;background:#FFFFFF;"></div>
<div style="left:308px;top:336px;width:1px;height:70px;background:#808080;"></div>
<svg style="left:219px;top:342px" width="16" height="11" shape-rendering="crispEdges"><rect x="1" y="0" width="14" height="1" fill="#808080"/><rect x="1" y="1" width="1" height="1" fill="#808080"/><rect x="2" y="1" width="12" height="1" fill="#C0C0C0"/><rect x="14" y="1" width="2" height="1" fill="#000000"/><rect x="1" y="2" width="1" height="1" fill="#808080"/><rect x="2" y="2" width="12" height="1" fill="#C0C0C0"/><rect x="14" y="2" width="2" height="1" fill="#000000"/><rect x="1" y="3" width="1" height="1" fill="#808080"/><rect x="2" y="3" width="5" height="1" fill="#C0C0C0"/><rect x="7" y="3" width="3" height="1" fill="#000000"/><rect x="10" y="3" width="4" height="1" fill="#C0C0C0"/><rect x="14" y="3" width="2" height="1" fill="#000000"/><rect x="1" y="4" width="1" height="1" fill="#808080"/><rect x="2" y="4" width="2" height="1" fill="#C0C0C0"/><rect x="4" y="4" width="4" height="1" fill="#000000"/><rect x="8" y="4" width="1" height="1" fill="#E8E070"/><rect x="9" y="4" width="1" height="1" fill="#FFFFFF"/><rect x="10" y="4" width="3" height="1" fill="#000000"/><rect x="13" y="4" width="1" height="1" fill="#C0C0C0"/><rect x="14" y="4" width="2" height="1" fill="#000000"/><rect x="0" y="5" width="4" height="1" fill="#000000"/><rect x="4" y="5" width="4" height="1" fill="#FFFFFF"/><rect x="8" y="5" width="2" height="1" fill="#E8E070"/><rect x="10" y="5" width="6" height="1" fill="#000000"/><rect x="0" y="6" width="1" height="1" fill="#000000"/><rect x="1" y="6" width="7" height="1" fill="#FFFFFF"/><rect x="8" y="6" width="1" height="1" fill="#E8E070"/><rect x="9" y="6" width="5" height="1" fill="#FFFFFF"/><rect x="14" y="6" width="1" height="1" fill="#000000"/><rect x="1" y="7" width="3" height="1" fill="#000000"/><rect x="4" y="7" width="4" height="1" fill="#FFFFFF"/><rect x="8" y="7" width="1" height="1" fill="#E8E070"/><rect x="9" y="7" width="5" height="1" fill="#000000"/><rect x="2" y="8" width="6" height="1" fill="#000000"/><rect x="8" y="8" width="1" height="1" fill="#E8E070"/><rect x="9" y="8" width="5" height="1" fill="#000000"/><rect x="4" y="9" width="4" height="1" fill="#000000"/><rect x="8" y="9" width="1" height="1" fill="#E8E070"/><rect x="9" y="9" width="1" height="1" fill="#000000"/><rect x="7" y="10" width="3" height="1" fill="#000000"/></svg>
<span style="left:235.74px;top:344px;font-weight:bold;transform:scaleX(1.0360);transform-origin:0 0;color:#000;">Disk 1</span>
<span style="left:217.69px;top:357px;transform:scaleX(0.8985);transform-origin:0 0;color:#000;">Basic</span>
<span style="left:217.70px;top:370px;transform:scaleX(0.9574);transform-origin:0 0;color:#000;">180.00 GB</span>
<span style="left:218.01px;top:383px;transform:scaleX(0.9419);transform-origin:0 0;color:#000;">Online</span>
<div style="left:310px;top:339px;width:214px;height:1px;background:#FFFFFF;"></div>
<div style="left:310px;top:339px;width:1px;height:63px;background:#FFFFFF;"></div>
<div style="left:310px;top:401px;width:215px;height:1px;background:#808080;"></div>
<div style="left:524px;top:339px;width:1px;height:63px;background:#808080;"></div>
<div style="left:311px;top:340px;width:213px;height:11px;background:#000088;"></div>
<div style="left:314px;top:354px;width:207px;height:44px;background:#fff;"></div>
<div style="left:314px;top:354px;width:207px;height:1px;background:#808080;"></div>
<div style="left:314px;top:354px;width:1px;height:44px;background:#808080;"></div>
<span style="left:317.51px;top:359px;font-weight:bold;transform:scaleX(1.0820);transform-origin:0 0;color:#000;">Multiboot  (E:)</span>
<span style="left:318.12px;top:372px;transform:scaleX(0.9144);transform-origin:0 0;color:#000;">32.00 GB NTFS</span>
<span style="left:317.62px;top:385px;transform:scaleX(0.9731);transform-origin:0 0;color:#000;">Healthy</span>
<div style="left:525px;top:339px;width:247px;height:1px;background:#FFFFFF;"></div>
<div style="left:525px;top:339px;width:1px;height:63px;background:#FFFFFF;"></div>
<div style="left:525px;top:401px;width:248px;height:1px;background:#808080;"></div>
<div style="left:772px;top:339px;width:1px;height:63px;background:#808080;"></div>
<div style="left:526px;top:340px;width:246px;height:11px;background:#000000;"></div>
<div style="left:529px;top:354px;width:240px;height:44px;background:#fff;"></div>
<div style="left:529px;top:354px;width:240px;height:1px;background:#808080;"></div>
<div style="left:529px;top:354px;width:1px;height:44px;background:#808080;"></div>
<span style="left:532.49px;top:372px;transform:scaleX(0.9633);transform-origin:0 0;color:#000;">148.00 GB</span>
<span style="left:532.47px;top:385px;transform:scaleX(0.9745);transform-origin:0 0;color:#000;">Unallocated</span>
<div style="left:209px;top:406px;width:566px;height:1px;background:#FFFFFF;"></div>
<div style="left:209px;top:406px;width:1px;height:71px;background:#FFFFFF;"></div>
<div style="left:209px;top:476px;width:566px;height:1px;background:#808080;"></div>
<div style="left:306px;top:406px;width:1px;height:71px;background:#FFFFFF;"></div>
<div style="left:308px;top:407px;width:1px;height:70px;background:#808080;"></div>
<svg style="left:219px;top:410px" width="16" height="15" shape-rendering="crispEdges"><rect x="5" y="0" width="1" height="1" fill="#33DDDD"/><rect x="6" y="0" width="1" height="1" fill="#00A040"/><rect x="7" y="0" width="2" height="1" fill="#FFFF00"/><rect x="9" y="0" width="2" height="1" fill="#A8C8F0"/><rect x="4" y="1" width="1" height="1" fill="#33DDDD"/><rect x="5" y="1" width="2" height="1" fill="#00A040"/><rect x="7" y="1" width="2" height="1" fill="#FFFF00"/><rect x="9" y="1" width="3" height="1" fill="#A8C8F0"/><rect x="12" y="1" width="1" height="1" fill="#000000"/><rect x="4" y="2" width="3" height="1" fill="#00A040"/><rect x="7" y="2" width="2" height="1" fill="#FFFF00"/><rect x="9" y="2" width="4" height="1" fill="#A8C8F0"/><rect x="13" y="2" width="1" height="1" fill="#000000"/><rect x="4" y="3" width="3" height="1" fill="#00A040"/><rect x="7" y="3" width="2" height="1" fill="#FFFF00"/><rect x="9" y="3" width="4" height="1" fill="#A8C8F0"/><rect x="13" y="3" width="1" height="1" fill="#000000"/><rect x="4" y="4" width="3" height="1" fill="#00A040"/><rect x="7" y="4" width="1" height="1" fill="#FFFF00"/><rect x="8" y="4" width="2" height="1" fill="#000000"/><rect x="10" y="4" width="3" height="1" fill="#A8C8F0"/><rect x="13" y="4" width="1" height="1" fill="#000000"/><rect x="4" y="5" width="3" height="1" fill="#00A040"/><rect x="7" y="5" width="1" height="1" fill="#000000"/><rect x="8" y="5" width="1" height="1" fill="#FFFFFF"/><rect x="9" y="5" width="1" height="1" fill="#000000"/><rect x="10" y="5" width="3" height="1" fill="#A8C8F0"/><rect x="13" y="5" width="1" height="1" fill="#000000"/><rect x="4" y="6" width="1" height="1" fill="#33DDDD"/><rect x="5" y="6" width="3" height="1" fill="#00A040"/><rect x="8" y="6" width="1" height="1" fill="#000000"/><rect x="9" y="6" width="4" height="1" fill="#A8C8F0"/><rect x="13" y="6" width="1" height="1" fill="#000000"/><rect x="5" y="7" width="3" height="1" fill="#00A040"/><rect x="8" y="7" width="1" height="1" fill="#FFFF00"/><rect x="9" y="7" width="3" height="1" fill="#A8C8F0"/><rect x="12" y="7" width="1" height="1" fill="#000000"/><rect x="0" y="8" width="4" height="1" fill="#808080"/><rect x="4" y="8" width="9" height="1" fill="#FFFFFF"/><rect x="13" y="8" width="1" height="1" fill="#000000"/><rect x="0" y="9" width="1" height="1" fill="#808080"/><rect x="1" y="9" width="12" height="1" fill="#FFFFFF"/><rect x="13" y="9" width="1" height="1" fill="#000000"/><rect x="0" y="10" width="1" height="1" fill="#808080"/><rect x="1" y="10" width="1" height="1" fill="#FFFFFF"/><rect x="2" y="10" width="11" height="1" fill="#E8E8E8"/><rect x="13" y="10" width="1" height="1" fill="#000000"/><rect x="0" y="11" width="1" height="1" fill="#808080"/><rect x="1" y="11" width="1" height="1" fill="#FFFFFF"/><rect x="2" y="11" width="1" height="1" fill="#E8E8E8"/><rect x="3" y="11" width="9" height="1" fill="#000000"/><rect x="12" y="11" width="1" height="1" fill="#E8E8E8"/><rect x="13" y="11" width="1" height="1" fill="#000000"/><rect x="0" y="12" width="1" height="1" fill="#808080"/><rect x="1" y="12" width="1" height="1" fill="#FFFFFF"/><rect x="2" y="12" width="10" height="1" fill="#E8E8E8"/><rect x="12" y="12" width="1" height="1" fill="#FFFFFF"/><rect x="13" y="12" width="1" height="1" fill="#000000"/><rect x="0" y="13" width="1" height="1" fill="#808080"/><rect x="1" y="13" width="12" height="1" fill="#E8E8E8"/><rect x="13" y="13" width="1" height="1" fill="#000000"/><rect x="1" y="14" width="13" height="1" fill="#000000"/></svg>
<span style="left:236.04px;top:415px;font-weight:bold;transform:scaleX(1.0320);transform-origin:0 0;color:#000;">CD-ROM 0</span>
<span style="left:217.97px;top:428px;transform:scaleX(0.9549);transform-origin:0 0;color:#000;">CD-ROM (D:)</span>
<span style="left:217.66px;top:454px;transform:scaleX(0.9333);transform-origin:0 0;color:#000;">No Media</span>
<div style="left:209px;top:553px;width:566px;height:1px;background:#FFFFFF;"></div>
<div style="left:209px;top:553px;width:1px;height:20px;background:#FFFFFF;"></div>
<div style="left:209px;top:572px;width:566px;height:1px;background:#808080;"></div>
<div style="left:774px;top:553px;width:1px;height:20px;background:#808080;"></div>
<div style="left:214px;top:556px;width:12px;height:14px;background:#fff;"></div>
<div style="left:214px;top:556px;width:11px;height:13px;background:#000;"></div>
<span style="left:230.05px;top:557px;color:#000;">Unallocated</span>
<div style="left:292px;top:556px;width:12px;height:14px;background:#fff;"></div>
<div style="left:292px;top:556px;width:11px;height:13px;background:#000088;"></div>
<span style="left:307.95px;top:557px;transform:scaleX(0.9470);transform-origin:0 0;color:#000;">Primary partition</span>
<div style="left:4px;top:577px;width:553px;height:1px;background:#808080;"></div>
<div style="left:4px;top:577px;width:1px;height:18px;background:#808080;"></div>
<div style="left:4px;top:594px;width:553px;height:1px;background:#FFFFFF;"></div>
<div style="left:556px;top:577px;width:1px;height:18px;background:#FFFFFF;"></div>
<div style="left:559px;top:577px;width:132px;height:1px;background:#808080;"></div>
<div style="left:559px;top:577px;width:1px;height:18px;background:#808080;"></div>
<div style="left:559px;top:594px;width:132px;height:1px;background:#FFFFFF;"></div>
<div style="left:690px;top:577px;width:1px;height:18px;background:#FFFFFF;"></div>
<div style="left:692px;top:577px;width:83px;height:1px;background:#808080;"></div>
<div style="left:692px;top:577px;width:1px;height:18px;background:#808080;"></div>
<div style="left:692px;top:594px;width:83px;height:1px;background:#FFFFFF;"></div>
<div style="left:774px;top:577px;width:1px;height:18px;background:#FFFFFF;"></div>
</body></html>
